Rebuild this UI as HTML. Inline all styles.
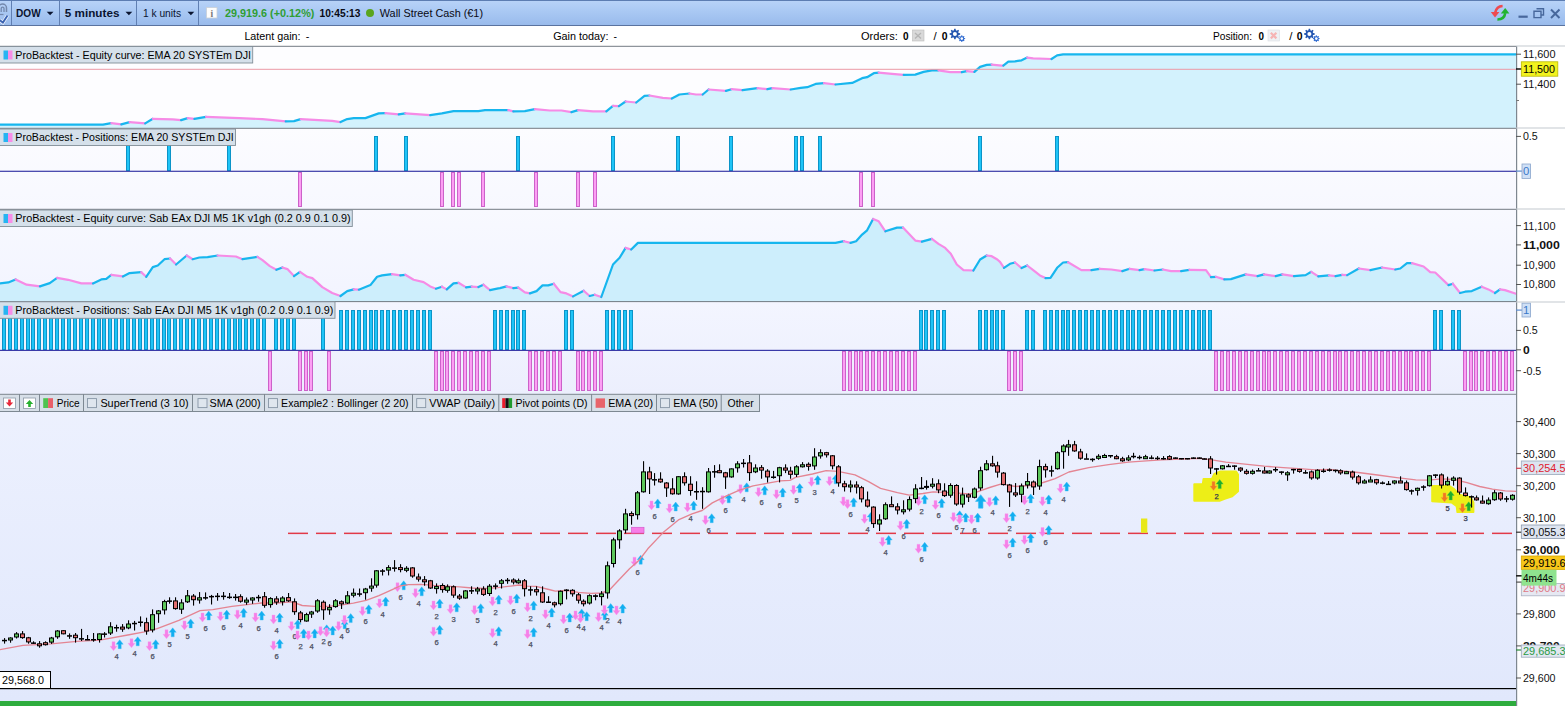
<!DOCTYPE html>
<html><head><meta charset="utf-8"><title>DOW - 5 minutes</title>
<style>html,body{margin:0;padding:0;background:#fff;overflow:hidden}svg{display:block}</style></head>
<body>
<svg width="1565" height="706" viewBox="0 0 1565 706" font-family="'Liberation Sans', Arial, sans-serif" shape-rendering="auto">
<defs>
<linearGradient id="tb" x1="0" y1="0" x2="0" y2="1"><stop offset="0" stop-color="#b9d3f8"/><stop offset="0.45" stop-color="#a9c8f3"/><stop offset="1" stop-color="#98baeb"/></linearGradient>
<linearGradient id="pbg" x1="0" y1="0" x2="0" y2="1"><stop offset="0" stop-color="#edf1fe"/><stop offset="1" stop-color="#e1e8fc"/></linearGradient>
<linearGradient id="p2bg" x1="0" y1="0" x2="0" y2="1"><stop offset="0" stop-color="#fcfcff"/><stop offset="1" stop-color="#f7f8ff"/></linearGradient>
<linearGradient id="p3bg" x1="0" y1="0" x2="0" y2="1"><stop offset="0" stop-color="#f8f9ff"/><stop offset="1" stop-color="#f2f4ff"/></linearGradient>
<linearGradient id="p4bg" x1="0" y1="0" x2="0" y2="1"><stop offset="0" stop-color="#f3f5ff"/><stop offset="1" stop-color="#eceffd"/></linearGradient>
<g id="pd"><path d="M-1.5,-4.5h3v4.5h2l-3.5,4.5l-3.5,-4.5h2z" fill="#f580e8" stroke="#f9a0ef" stroke-width="0.4"/></g>
<g id="bu"><path d="M-1.5,4.5h3v-4.5h2l-3.5,-4.5l-3.5,4.5h2z" fill="#12aef0" stroke="#3cc0f4" stroke-width="0.4"/></g>
<g id="od"><path d="M-1.5,-4.5h3v4.5h2l-3.5,4.5l-3.5,-4.5h2z" fill="#f27a1c" stroke="#f5a050" stroke-width="0.4"/></g>
<g id="gu"><path d="M-1.5,4.5h3v-4.5h2l-3.5,-4.5l-3.5,4.5h2z" fill="#1fae2a" stroke="#45c24e" stroke-width="0.4"/></g>
</defs>
<rect width="1565" height="706" fill="#fff"/>
<rect x="0" y="0" width="1565" height="26" fill="url(#tb)"/>
<rect x="0" y="0" width="1565" height="1" fill="#5d7db2"/>
<rect x="0" y="25" width="1565" height="1" fill="#5a739f"/>
<rect x="11.0" y="1" width="1" height="24" fill="#607fb2"/>
<rect x="59.0" y="1" width="1" height="24" fill="#607fb2"/>
<rect x="136.0" y="1" width="1" height="24" fill="#607fb2"/>
<rect x="198.0" y="1" width="1" height="24" fill="#607fb2"/>
<path d="M-1.5,12 V8 a4,4 0 0 1 8,0 V12" stroke="#7489ad" stroke-width="1.5" fill="none"/>
<path d="M1.2,12 V8.6 a1.4,1.4 0 0 1 2.8,0 V12" stroke="#7489ad" stroke-width="1.3" fill="none"/>
<path d="M-0.5,14.5h4" stroke="#7489ad" stroke-width="1.2"/>
<path d="M-0.5,20 l3.4,2.6 l4.6,-7" stroke="#f4f8ff" stroke-width="3.4" fill="none"/>
<path d="M-0.5,20 l3.4,2.6 l4.6,-7" stroke="#3a63b2" stroke-width="1.9" fill="none"/>
<text x="16.1" y="16.8" font-size="11.5" font-weight="bold" fill="#0a1430" textLength="24.6" lengthAdjust="spacingAndGlyphs">DOW</text>
<text x="64.8" y="16.8" font-size="11.5" font-weight="bold" fill="#0a1430" textLength="54.6" lengthAdjust="spacingAndGlyphs">5 minutes</text>
<text x="142.9" y="16.8" font-size="11.5" font-weight="normal" fill="#0a1430" textLength="38.1" lengthAdjust="spacingAndGlyphs">1 k units</text>
<path d="M46.7,11.8h6.8l-3.4,3.4z" fill="#0a1430"/>
<path d="M125.5,11.8h6.8l-3.4,3.4z" fill="#0a1430"/>
<path d="M187.5,11.8h6.8l-3.4,3.4z" fill="#0a1430"/>
<rect x="206.5" y="7.5" width="10.5" height="10.5" fill="#fdfdfd" stroke="#c9cfd8" stroke-width="0.8"/>
<text x="211.8" y="16.5" font-size="9.5" font-weight="bold" font-family="'Liberation Serif', serif" fill="#777" text-anchor="middle">i</text>
<text x="224.9" y="16.8" font-size="11.5" font-weight="bold" fill="#2f9e33" textLength="89.5" lengthAdjust="spacingAndGlyphs">29,919.6 (+0.12%)</text>
<text x="319.5" y="16.8" font-size="11.5" font-weight="bold" fill="#0a0a14" textLength="40.9" lengthAdjust="spacingAndGlyphs">10:45:13</text>
<circle cx="370" cy="13" r="4" fill="#5aa51e"/>
<text x="379.8" y="16.8" font-size="11.5" font-weight="normal" fill="#0a0a14" textLength="103.2" lengthAdjust="spacingAndGlyphs">Wall Street Cash (€1)</text>
<path d="M1502.6,6 Q1496.6,6.3 1495.2,12.6" stroke="#ee4a50" stroke-width="2.6" fill="none"/><path d="M1490.8,12h8.6l-4.4,5.6z" fill="#ee4a50"/>
<path d="M1497.4,19.5 Q1504.4,19.6 1505.2,13.2" stroke="#22b430" stroke-width="2.6" fill="none"/><path d="M1500.8,13.5h8.6l-4.2,-5.4z" fill="#22b430"/>
<rect x="1518.5" y="15.6" width="9.2" height="2.2" fill="#47679c"/>
<path d="M1536.5,8.8h7v6.2h-2.4 M1534,11.2h7v6.4h-7z" stroke="#47679c" stroke-width="1.4" fill="none"/>
<path d="M1551,9.5l8.5,8.5M1559.5,9.5l-8.5,8.5" stroke="#47679c" stroke-width="2" fill="none"/>
<text x="244.4" y="40.0" font-size="10.8" font-weight="normal" fill="#000" textLength="56.2" lengthAdjust="spacingAndGlyphs">Latent gain:</text>
<text x="305.7" y="40.0" font-size="10.8" font-weight="normal" fill="#000" textLength="3.6" lengthAdjust="spacingAndGlyphs">-</text>
<text x="553.2" y="40.0" font-size="10.8" font-weight="normal" fill="#000" textLength="55.2" lengthAdjust="spacingAndGlyphs">Gain today:</text>
<text x="613.5" y="40.0" font-size="10.8" font-weight="normal" fill="#000" textLength="3.5" lengthAdjust="spacingAndGlyphs">-</text>
<text x="861.0" y="40.0" font-size="10.8" font-weight="normal" fill="#000" textLength="36.8" lengthAdjust="spacingAndGlyphs">Orders:</text>
<text x="903.0" y="40.0" font-size="10.8" font-weight="bold" fill="#000" textLength="5.6" lengthAdjust="spacingAndGlyphs">0</text>
<rect x="912.5" y="30" width="11.5" height="11" fill="#d9d9d9" stroke="#bdbdbd" stroke-width="0.6"/><path d="M915,33l6,5.5M921,33l-6,5.5" stroke="#b4b4b4" stroke-width="1.3"/>
<text x="933.6" y="40.0" font-size="10.8" font-weight="normal" fill="#000" textLength="3.2" lengthAdjust="spacingAndGlyphs">/</text>
<text x="941.8" y="40.0" font-size="10.8" font-weight="bold" fill="#000" textLength="5.8" lengthAdjust="spacingAndGlyphs">0</text>
<text x="1213.0" y="40.0" font-size="10.8" font-weight="normal" fill="#000" textLength="39.0" lengthAdjust="spacingAndGlyphs">Position:</text>
<text x="1258.5" y="40.0" font-size="10.8" font-weight="bold" fill="#000" textLength="5.5" lengthAdjust="spacingAndGlyphs">0</text>
<rect x="1268" y="30" width="11.5" height="11" fill="#eef1f4" stroke="#d9dee3" stroke-width="0.6"/><path d="M1270.8,32.8l5.6,5.6M1276.4,32.8l-5.6,5.6" stroke="#f6b4b4" stroke-width="2.2"/>
<text x="1289.2" y="40.0" font-size="10.8" font-weight="normal" fill="#000" textLength="3.2" lengthAdjust="spacingAndGlyphs">/</text>
<text x="1296.8" y="40.0" font-size="10.8" font-weight="bold" fill="#000" textLength="5.8" lengthAdjust="spacingAndGlyphs">0</text>
<path d="M960.16,33.31L960.16,34.69L958.59,34.99L958.21,35.91L959.10,37.23L958.13,38.20L956.81,37.31L955.89,37.69L955.59,39.26L954.21,39.26L953.91,37.69L952.99,37.31L951.67,38.20L950.70,37.23L951.59,35.91L951.21,34.99L949.64,34.69L949.64,33.31L951.21,33.01L951.59,32.09L950.70,30.77L951.67,29.80L952.99,30.69L953.91,30.31L954.21,28.74L955.59,28.74L955.89,30.31L956.81,30.69L958.13,29.80L959.10,30.77L958.21,32.09L958.59,33.01z" fill="#2456b0"/><circle cx="954.9" cy="34.0" r="2.01" fill="#fff"/>
<path d="M965.17,38.16L965.17,39.04L964.16,39.24L963.92,39.82L964.50,40.67L963.87,41.30L963.02,40.72L962.44,40.96L962.24,41.97L961.36,41.97L961.16,40.96L960.58,40.72L959.73,41.30L959.10,40.67L959.68,39.82L959.44,39.24L958.43,39.04L958.43,38.16L959.44,37.96L959.68,37.38L959.10,36.53L959.73,35.90L960.58,36.48L961.16,36.24L961.36,35.23L962.24,35.23L962.44,36.24L963.02,36.48L963.87,35.90L964.50,36.53L963.92,37.38L964.16,37.96z" fill="#2f6ad0"/><circle cx="961.8" cy="38.6" r="1.29" fill="#fff"/>
<path d="M1314.66,33.31L1314.66,34.69L1313.09,34.99L1312.71,35.91L1313.60,37.23L1312.63,38.20L1311.31,37.31L1310.39,37.69L1310.09,39.26L1308.71,39.26L1308.41,37.69L1307.49,37.31L1306.17,38.20L1305.20,37.23L1306.09,35.91L1305.71,34.99L1304.14,34.69L1304.14,33.31L1305.71,33.01L1306.09,32.09L1305.20,30.77L1306.17,29.80L1307.49,30.69L1308.41,30.31L1308.71,28.74L1310.09,28.74L1310.39,30.31L1311.31,30.69L1312.63,29.80L1313.60,30.77L1312.71,32.09L1313.09,33.01z" fill="#2456b0"/><circle cx="1309.4" cy="34.0" r="2.01" fill="#fff"/>
<path d="M1319.67,38.16L1319.67,39.04L1318.66,39.24L1318.42,39.82L1319.00,40.67L1318.37,41.30L1317.52,40.72L1316.94,40.96L1316.74,41.97L1315.86,41.97L1315.66,40.96L1315.08,40.72L1314.23,41.30L1313.60,40.67L1314.18,39.82L1313.94,39.24L1312.93,39.04L1312.93,38.16L1313.94,37.96L1314.18,37.38L1313.60,36.53L1314.23,35.90L1315.08,36.48L1315.66,36.24L1315.86,35.23L1316.74,35.23L1316.94,36.24L1317.52,36.48L1318.37,35.90L1319.00,36.53L1318.42,37.38L1318.66,37.96z" fill="#2f6ad0"/><circle cx="1316.3000000000002" cy="38.6" r="1.29" fill="#fff"/>
<rect x="0" y="46" width="1516" height="82" fill="#fdfdff"/>
<rect x="0" y="128" width="1516" height="81" fill="url(#p2bg)"/>
<rect x="0" y="209" width="1516" height="93" fill="url(#p3bg)"/>
<rect x="0" y="302" width="1516" height="92" fill="url(#p4bg)"/>
<rect x="0" y="394" width="1516" height="307" fill="url(#pbg)"/>
<path d="M0.0,124.7 L103.0,124.7 L111.3,123.1 L121.3,124.4 L129.6,122.1 L145.2,123.4 L152.8,118.8 L172.8,119.4 L181.1,120.1 L187.7,118.1 L194.4,118.8 L206.0,116.8 L239.2,118.1 L262.5,119.1 L285.7,121.4 L294.0,121.1 L300.7,119.1 L332.2,120.8 L340.5,122.1 L347.2,119.1 L353.8,118.1 L365.4,118.1 L378.7,113.4 L385.4,113.1 L398.7,114.4 L405.3,113.4 L430.2,115.1 L441.9,113.4 L453.5,111.1 L478.4,111.1 L485.0,110.1 L508.3,110.1 L513.3,111.4 L524.9,111.1 L534.9,109.1 L549.8,110.5 L561.5,110.5 L571.4,112.1 L578.1,110.1 L593.0,111.4 L606.3,111.4 L613.0,105.8 L618.9,106.1 L625.6,101.5 L636.2,102.5 L644.5,95.8 L649.5,95.5 L662.8,97.8 L671.8,98.5 L679.4,94.5 L689.4,93.5 L696.0,94.5 L702.7,94.5 L708.6,89.5 L725.9,90.9 L731.6,89.2 L742.5,90.2 L757.5,88.2 L767.4,89.2 L772.4,88.2 L790.7,89.5 L800.7,87.9 L807.3,87.2 L815.6,83.9 L823.9,83.2 L835.5,84.5 L852.2,82.9 L862.1,78.2 L867.1,77.2 L873.8,73.2 L878.7,72.6 L892.0,73.9 L903.7,74.9 L915.3,74.6 L923.6,71.9 L931.9,70.3 L938.5,70.3 L950.2,72.2 L961.8,72.2 L966.8,71.2 L974.4,71.9 L980.1,66.9 L986.7,64.9 L991.7,64.6 L1001.7,65.6 L1003.3,65.6 L1008.3,61.6 L1015.0,61.3 L1021.6,60.3 L1027.2,57.6 L1033.2,58.3 L1051.5,59.0 L1057.1,55.3 L1063.1,54.3 L1516.0,54.3 L1516.0,128 L0.0,128 z" fill="#d3f2fd"/>
<path d="M0.0,124.7 L103.0,124.7 L111.3,123.1" fill="none" stroke="#17b6ee" stroke-width="2.2" stroke-linejoin="round" stroke-linecap="round"/>
<path d="M111.3,123.1 L121.3,124.4" fill="none" stroke="#f68be6" stroke-width="2.2" stroke-linejoin="round" stroke-linecap="round"/>
<path d="M121.3,124.4 L129.6,122.1" fill="none" stroke="#17b6ee" stroke-width="2.2" stroke-linejoin="round" stroke-linecap="round"/>
<path d="M129.6,122.1 L145.2,123.4" fill="none" stroke="#f68be6" stroke-width="2.2" stroke-linejoin="round" stroke-linecap="round"/>
<path d="M145.2,123.4 L152.8,118.8" fill="none" stroke="#17b6ee" stroke-width="2.2" stroke-linejoin="round" stroke-linecap="round"/>
<path d="M152.8,118.8 L172.8,119.4 L181.1,120.1" fill="none" stroke="#f68be6" stroke-width="2.2" stroke-linejoin="round" stroke-linecap="round"/>
<path d="M181.1,120.1 L187.7,118.1" fill="none" stroke="#17b6ee" stroke-width="2.2" stroke-linejoin="round" stroke-linecap="round"/>
<path d="M187.7,118.1 L194.4,118.8" fill="none" stroke="#f68be6" stroke-width="2.2" stroke-linejoin="round" stroke-linecap="round"/>
<path d="M194.4,118.8 L206.0,116.8" fill="none" stroke="#17b6ee" stroke-width="2.2" stroke-linejoin="round" stroke-linecap="round"/>
<path d="M206.0,116.8 L239.2,118.1 L262.5,119.1 L285.7,121.4" fill="none" stroke="#f68be6" stroke-width="2.2" stroke-linejoin="round" stroke-linecap="round"/>
<path d="M285.7,121.4 L294.0,121.1 L300.7,119.1" fill="none" stroke="#17b6ee" stroke-width="2.2" stroke-linejoin="round" stroke-linecap="round"/>
<path d="M300.7,119.1 L332.2,120.8 L340.5,122.1" fill="none" stroke="#f68be6" stroke-width="2.2" stroke-linejoin="round" stroke-linecap="round"/>
<path d="M340.5,122.1 L347.2,119.1 L353.8,118.1 L365.4,118.1 L378.7,113.4 L385.4,113.1" fill="none" stroke="#17b6ee" stroke-width="2.2" stroke-linejoin="round" stroke-linecap="round"/>
<path d="M385.4,113.1 L398.7,114.4" fill="none" stroke="#f68be6" stroke-width="2.2" stroke-linejoin="round" stroke-linecap="round"/>
<path d="M398.7,114.4 L405.3,113.4" fill="none" stroke="#17b6ee" stroke-width="2.2" stroke-linejoin="round" stroke-linecap="round"/>
<path d="M405.3,113.4 L430.2,115.1" fill="none" stroke="#f68be6" stroke-width="2.2" stroke-linejoin="round" stroke-linecap="round"/>
<path d="M430.2,115.1 L441.9,113.4 L453.5,111.1 L478.4,111.1 L485.0,110.1 L508.3,110.1" fill="none" stroke="#17b6ee" stroke-width="2.2" stroke-linejoin="round" stroke-linecap="round"/>
<path d="M508.3,110.1 L513.3,111.4" fill="none" stroke="#f68be6" stroke-width="2.2" stroke-linejoin="round" stroke-linecap="round"/>
<path d="M513.3,111.4 L524.9,111.1 L534.9,109.1" fill="none" stroke="#17b6ee" stroke-width="2.2" stroke-linejoin="round" stroke-linecap="round"/>
<path d="M534.9,109.1 L549.8,110.5 L561.5,110.5 L571.4,112.1" fill="none" stroke="#f68be6" stroke-width="2.2" stroke-linejoin="round" stroke-linecap="round"/>
<path d="M571.4,112.1 L578.1,110.1" fill="none" stroke="#17b6ee" stroke-width="2.2" stroke-linejoin="round" stroke-linecap="round"/>
<path d="M578.1,110.1 L593.0,111.4 L606.3,111.4" fill="none" stroke="#f68be6" stroke-width="2.2" stroke-linejoin="round" stroke-linecap="round"/>
<path d="M606.3,111.4 L613.0,105.8" fill="none" stroke="#17b6ee" stroke-width="2.2" stroke-linejoin="round" stroke-linecap="round"/>
<path d="M613.0,105.8 L618.9,106.1" fill="none" stroke="#f68be6" stroke-width="2.2" stroke-linejoin="round" stroke-linecap="round"/>
<path d="M618.9,106.1 L625.6,101.5" fill="none" stroke="#17b6ee" stroke-width="2.2" stroke-linejoin="round" stroke-linecap="round"/>
<path d="M625.6,101.5 L636.2,102.5" fill="none" stroke="#f68be6" stroke-width="2.2" stroke-linejoin="round" stroke-linecap="round"/>
<path d="M636.2,102.5 L644.5,95.8 L649.5,95.5" fill="none" stroke="#17b6ee" stroke-width="2.2" stroke-linejoin="round" stroke-linecap="round"/>
<path d="M649.5,95.5 L662.8,97.8 L671.8,98.5" fill="none" stroke="#f68be6" stroke-width="2.2" stroke-linejoin="round" stroke-linecap="round"/>
<path d="M671.8,98.5 L679.4,94.5 L689.4,93.5" fill="none" stroke="#17b6ee" stroke-width="2.2" stroke-linejoin="round" stroke-linecap="round"/>
<path d="M689.4,93.5 L696.0,94.5 L702.7,94.5" fill="none" stroke="#f68be6" stroke-width="2.2" stroke-linejoin="round" stroke-linecap="round"/>
<path d="M702.7,94.5 L708.6,89.5" fill="none" stroke="#17b6ee" stroke-width="2.2" stroke-linejoin="round" stroke-linecap="round"/>
<path d="M708.6,89.5 L725.9,90.9" fill="none" stroke="#f68be6" stroke-width="2.2" stroke-linejoin="round" stroke-linecap="round"/>
<path d="M725.9,90.9 L731.6,89.2" fill="none" stroke="#17b6ee" stroke-width="2.2" stroke-linejoin="round" stroke-linecap="round"/>
<path d="M731.6,89.2 L742.5,90.2" fill="none" stroke="#f68be6" stroke-width="2.2" stroke-linejoin="round" stroke-linecap="round"/>
<path d="M742.5,90.2 L757.5,88.2" fill="none" stroke="#17b6ee" stroke-width="2.2" stroke-linejoin="round" stroke-linecap="round"/>
<path d="M757.5,88.2 L767.4,89.2" fill="none" stroke="#f68be6" stroke-width="2.2" stroke-linejoin="round" stroke-linecap="round"/>
<path d="M767.4,89.2 L772.4,88.2" fill="none" stroke="#17b6ee" stroke-width="2.2" stroke-linejoin="round" stroke-linecap="round"/>
<path d="M772.4,88.2 L790.7,89.5" fill="none" stroke="#f68be6" stroke-width="2.2" stroke-linejoin="round" stroke-linecap="round"/>
<path d="M790.7,89.5 L800.7,87.9 L807.3,87.2 L815.6,83.9 L823.9,83.2" fill="none" stroke="#17b6ee" stroke-width="2.2" stroke-linejoin="round" stroke-linecap="round"/>
<path d="M823.9,83.2 L835.5,84.5" fill="none" stroke="#f68be6" stroke-width="2.2" stroke-linejoin="round" stroke-linecap="round"/>
<path d="M835.5,84.5 L852.2,82.9 L862.1,78.2 L867.1,77.2 L873.8,73.2 L878.7,72.6" fill="none" stroke="#17b6ee" stroke-width="2.2" stroke-linejoin="round" stroke-linecap="round"/>
<path d="M878.7,72.6 L892.0,73.9 L903.7,74.9" fill="none" stroke="#f68be6" stroke-width="2.2" stroke-linejoin="round" stroke-linecap="round"/>
<path d="M903.7,74.9 L915.3,74.6 L923.6,71.9 L931.9,70.3 L938.5,70.3" fill="none" stroke="#17b6ee" stroke-width="2.2" stroke-linejoin="round" stroke-linecap="round"/>
<path d="M938.5,70.3 L950.2,72.2 L961.8,72.2" fill="none" stroke="#f68be6" stroke-width="2.2" stroke-linejoin="round" stroke-linecap="round"/>
<path d="M961.8,72.2 L966.8,71.2" fill="none" stroke="#17b6ee" stroke-width="2.2" stroke-linejoin="round" stroke-linecap="round"/>
<path d="M966.8,71.2 L974.4,71.9" fill="none" stroke="#f68be6" stroke-width="2.2" stroke-linejoin="round" stroke-linecap="round"/>
<path d="M974.4,71.9 L980.1,66.9 L986.7,64.9 L991.7,64.6" fill="none" stroke="#17b6ee" stroke-width="2.2" stroke-linejoin="round" stroke-linecap="round"/>
<path d="M991.7,64.6 L1001.7,65.6 L1003.3,65.6" fill="none" stroke="#f68be6" stroke-width="2.2" stroke-linejoin="round" stroke-linecap="round"/>
<path d="M1003.3,65.6 L1008.3,61.6 L1015.0,61.3 L1021.6,60.3 L1027.2,57.6" fill="none" stroke="#17b6ee" stroke-width="2.2" stroke-linejoin="round" stroke-linecap="round"/>
<path d="M1027.2,57.6 L1033.2,58.3 L1051.5,59.0" fill="none" stroke="#f68be6" stroke-width="2.2" stroke-linejoin="round" stroke-linecap="round"/>
<path d="M1051.5,59.0 L1057.1,55.3 L1063.1,54.3 L1516.0,54.3" fill="none" stroke="#17b6ee" stroke-width="2.2" stroke-linejoin="round" stroke-linecap="round"/>
<rect x="0" y="68.8" width="1516" height="1" fill="#eb9aa6"/>
<path d="M0.0,283.4 L8.3,282.4 L15.6,279.4 L26.6,284.7 L39.9,286.4 L49.8,283.1 L57.1,277.8 L68.1,279.8 L81.4,283.4 L93.0,283.4 L101.3,279.4 L106.3,278.8 L111.3,274.8 L122.9,276.4 L129.6,273.1 L141.2,272.1 L146.2,276.8 L152.8,267.1 L157.8,265.5 L164.5,259.2 L170.1,258.5 L176.1,264.5 L186.7,255.5 L192.7,259.2 L199.3,257.5 L207.6,257.2 L217.6,255.5 L235.9,256.5 L242.5,259.2 L257.5,256.8 L262.5,260.2 L269.8,266.1 L276.4,269.8 L282.4,267.5 L287.4,269.1 L294.0,276.1 L300.0,271.8 L307.3,276.8 L312.3,278.1 L322.3,287.1 L332.2,293.0 L340.5,296.0 L347.2,291.1 L353.8,289.4 L358.8,289.7 L370.4,285.1 L377.1,276.8 L382.1,275.4 L392.0,274.1 L400.3,275.4 L405.3,274.8 L413.6,279.8 L423.6,282.1 L430.2,286.4 L435.9,288.7 L441.9,286.7 L446.8,289.4 L453.5,283.4 L458.5,282.8 L466.1,287.4 L471.8,286.7 L478.4,287.1 L483.4,284.7 L490.0,290.1 L498.3,288.4 L500.0,288.1 L506.6,286.4 L513.3,288.1 L518.3,287.7 L524.9,292.4 L529.9,293.4 L536.5,291.1 L542.5,285.4 L548.2,285.4 L553.8,283.7 L560.5,292.1 L566.4,293.4 L573.1,296.4 L583.7,290.7 L589.7,296.0 L594.7,294.7 L601.3,297.0 L613.0,264.5 L619.6,257.8 L625.6,247.9 L631.2,249.5 L637.9,242.9 L835.5,242.9 L843.9,241.2 L850.5,242.9 L856.1,241.2 L862.1,234.6 L867.1,230.3 L873.1,219.0 L878.7,221.3 L885.4,231.3 L897.0,227.6 L903.0,227.6 L915.3,240.6 L921.9,241.6 L931.9,238.9 L938.5,243.9 L945.2,247.9 L950.8,253.8 L956.8,264.5 L963.5,270.1 L973.4,270.5 L980.1,259.5 L986.7,255.5 L991.7,256.2 L997.3,259.5 L1000.0,261.8 L1004.0,267.8 L1010.0,263.8 L1015.0,262.5 L1021.6,268.1 L1027.2,265.5 L1033.2,270.1 L1039.9,275.4 L1045.5,278.1 L1050.5,277.8 L1057.1,267.8 L1063.1,262.5 L1068.1,262.2 L1081.4,270.1 L1091.4,270.1 L1099.7,268.8 L1111.3,269.5 L1122.3,271.1 L1129.6,268.8 L1139.5,270.1 L1144.5,269.1 L1154.5,270.5 L1162.8,269.5 L1171.1,271.1 L1181.1,271.1 L1189.4,269.8 L1206.0,270.1 L1211.0,277.1 L1215.9,276.8 L1224.3,279.4 L1230.9,279.1 L1245.8,274.4 L1257.5,276.1 L1264.1,274.4 L1275.7,276.1 L1282.4,274.4 L1294.0,276.1 L1305.6,275.1 L1311.3,271.8 L1318.3,276.4 L1328.9,275.4 L1335.5,276.1 L1342.2,274.8 L1347.2,275.1 L1358.8,268.5 L1370.4,270.1 L1382.1,267.5 L1395.3,269.5 L1400.3,268.5 L1407.0,263.1 L1412.0,263.1 L1423.6,266.5 L1430.2,272.1 L1435.2,272.5 L1448.5,285.1 L1452.8,283.7 L1460.1,293.0 L1465.1,291.7 L1471.8,291.1 L1481.7,286.7 L1488.4,289.4 L1495.0,293.0 L1500.0,289.4 L1505.0,290.1 L1516.0,293.7 L1516.0,302 L0.0,302 z" fill="#cdeefc"/>
<path d="M0.0,283.4 L8.3,282.4 L15.6,279.4" fill="none" stroke="#17b6ee" stroke-width="2.2" stroke-linejoin="round" stroke-linecap="round"/>
<path d="M15.6,279.4 L26.6,284.7 L39.9,286.4" fill="none" stroke="#f68be6" stroke-width="2.2" stroke-linejoin="round" stroke-linecap="round"/>
<path d="M39.9,286.4 L49.8,283.1 L57.1,277.8" fill="none" stroke="#17b6ee" stroke-width="2.2" stroke-linejoin="round" stroke-linecap="round"/>
<path d="M57.1,277.8 L68.1,279.8 L81.4,283.4 L93.0,283.4" fill="none" stroke="#f68be6" stroke-width="2.2" stroke-linejoin="round" stroke-linecap="round"/>
<path d="M93.0,283.4 L101.3,279.4 L106.3,278.8 L111.3,274.8" fill="none" stroke="#17b6ee" stroke-width="2.2" stroke-linejoin="round" stroke-linecap="round"/>
<path d="M111.3,274.8 L122.9,276.4" fill="none" stroke="#f68be6" stroke-width="2.2" stroke-linejoin="round" stroke-linecap="round"/>
<path d="M122.9,276.4 L129.6,273.1 L141.2,272.1" fill="none" stroke="#17b6ee" stroke-width="2.2" stroke-linejoin="round" stroke-linecap="round"/>
<path d="M141.2,272.1 L146.2,276.8" fill="none" stroke="#f68be6" stroke-width="2.2" stroke-linejoin="round" stroke-linecap="round"/>
<path d="M146.2,276.8 L152.8,267.1 L157.8,265.5 L164.5,259.2 L170.1,258.5" fill="none" stroke="#17b6ee" stroke-width="2.2" stroke-linejoin="round" stroke-linecap="round"/>
<path d="M170.1,258.5 L176.1,264.5" fill="none" stroke="#f68be6" stroke-width="2.2" stroke-linejoin="round" stroke-linecap="round"/>
<path d="M176.1,264.5 L186.7,255.5" fill="none" stroke="#17b6ee" stroke-width="2.2" stroke-linejoin="round" stroke-linecap="round"/>
<path d="M186.7,255.5 L192.7,259.2" fill="none" stroke="#f68be6" stroke-width="2.2" stroke-linejoin="round" stroke-linecap="round"/>
<path d="M192.7,259.2 L199.3,257.5 L207.6,257.2 L217.6,255.5" fill="none" stroke="#17b6ee" stroke-width="2.2" stroke-linejoin="round" stroke-linecap="round"/>
<path d="M217.6,255.5 L235.9,256.5 L242.5,259.2" fill="none" stroke="#f68be6" stroke-width="2.2" stroke-linejoin="round" stroke-linecap="round"/>
<path d="M242.5,259.2 L257.5,256.8" fill="none" stroke="#17b6ee" stroke-width="2.2" stroke-linejoin="round" stroke-linecap="round"/>
<path d="M257.5,256.8 L262.5,260.2 L269.8,266.1 L276.4,269.8" fill="none" stroke="#f68be6" stroke-width="2.2" stroke-linejoin="round" stroke-linecap="round"/>
<path d="M276.4,269.8 L282.4,267.5" fill="none" stroke="#17b6ee" stroke-width="2.2" stroke-linejoin="round" stroke-linecap="round"/>
<path d="M282.4,267.5 L287.4,269.1 L294.0,276.1" fill="none" stroke="#f68be6" stroke-width="2.2" stroke-linejoin="round" stroke-linecap="round"/>
<path d="M294.0,276.1 L300.0,271.8" fill="none" stroke="#17b6ee" stroke-width="2.2" stroke-linejoin="round" stroke-linecap="round"/>
<path d="M300.0,271.8 L307.3,276.8 L312.3,278.1 L322.3,287.1 L332.2,293.0 L340.5,296.0" fill="none" stroke="#f68be6" stroke-width="2.2" stroke-linejoin="round" stroke-linecap="round"/>
<path d="M340.5,296.0 L347.2,291.1 L353.8,289.4" fill="none" stroke="#17b6ee" stroke-width="2.2" stroke-linejoin="round" stroke-linecap="round"/>
<path d="M353.8,289.4 L358.8,289.7" fill="none" stroke="#f68be6" stroke-width="2.2" stroke-linejoin="round" stroke-linecap="round"/>
<path d="M358.8,289.7 L370.4,285.1 L377.1,276.8 L382.1,275.4 L392.0,274.1" fill="none" stroke="#17b6ee" stroke-width="2.2" stroke-linejoin="round" stroke-linecap="round"/>
<path d="M392.0,274.1 L400.3,275.4" fill="none" stroke="#f68be6" stroke-width="2.2" stroke-linejoin="round" stroke-linecap="round"/>
<path d="M400.3,275.4 L405.3,274.8" fill="none" stroke="#17b6ee" stroke-width="2.2" stroke-linejoin="round" stroke-linecap="round"/>
<path d="M405.3,274.8 L413.6,279.8 L423.6,282.1 L430.2,286.4 L435.9,288.7" fill="none" stroke="#f68be6" stroke-width="2.2" stroke-linejoin="round" stroke-linecap="round"/>
<path d="M435.9,288.7 L441.9,286.7" fill="none" stroke="#17b6ee" stroke-width="2.2" stroke-linejoin="round" stroke-linecap="round"/>
<path d="M441.9,286.7 L446.8,289.4" fill="none" stroke="#f68be6" stroke-width="2.2" stroke-linejoin="round" stroke-linecap="round"/>
<path d="M446.8,289.4 L453.5,283.4 L458.5,282.8" fill="none" stroke="#17b6ee" stroke-width="2.2" stroke-linejoin="round" stroke-linecap="round"/>
<path d="M458.5,282.8 L466.1,287.4" fill="none" stroke="#f68be6" stroke-width="2.2" stroke-linejoin="round" stroke-linecap="round"/>
<path d="M466.1,287.4 L471.8,286.7" fill="none" stroke="#17b6ee" stroke-width="2.2" stroke-linejoin="round" stroke-linecap="round"/>
<path d="M471.8,286.7 L478.4,287.1" fill="none" stroke="#f68be6" stroke-width="2.2" stroke-linejoin="round" stroke-linecap="round"/>
<path d="M478.4,287.1 L483.4,284.7" fill="none" stroke="#17b6ee" stroke-width="2.2" stroke-linejoin="round" stroke-linecap="round"/>
<path d="M483.4,284.7 L490.0,290.1" fill="none" stroke="#f68be6" stroke-width="2.2" stroke-linejoin="round" stroke-linecap="round"/>
<path d="M490.0,290.1 L498.3,288.4 L500.0,288.1 L506.6,286.4" fill="none" stroke="#17b6ee" stroke-width="2.2" stroke-linejoin="round" stroke-linecap="round"/>
<path d="M506.6,286.4 L513.3,288.1" fill="none" stroke="#f68be6" stroke-width="2.2" stroke-linejoin="round" stroke-linecap="round"/>
<path d="M513.3,288.1 L518.3,287.7" fill="none" stroke="#17b6ee" stroke-width="2.2" stroke-linejoin="round" stroke-linecap="round"/>
<path d="M518.3,287.7 L524.9,292.4 L529.9,293.4" fill="none" stroke="#f68be6" stroke-width="2.2" stroke-linejoin="round" stroke-linecap="round"/>
<path d="M529.9,293.4 L536.5,291.1 L542.5,285.4 L548.2,285.4 L553.8,283.7" fill="none" stroke="#17b6ee" stroke-width="2.2" stroke-linejoin="round" stroke-linecap="round"/>
<path d="M553.8,283.7 L560.5,292.1 L566.4,293.4 L573.1,296.4" fill="none" stroke="#f68be6" stroke-width="2.2" stroke-linejoin="round" stroke-linecap="round"/>
<path d="M573.1,296.4 L583.7,290.7" fill="none" stroke="#17b6ee" stroke-width="2.2" stroke-linejoin="round" stroke-linecap="round"/>
<path d="M583.7,290.7 L589.7,296.0" fill="none" stroke="#f68be6" stroke-width="2.2" stroke-linejoin="round" stroke-linecap="round"/>
<path d="M589.7,296.0 L594.7,294.7" fill="none" stroke="#17b6ee" stroke-width="2.2" stroke-linejoin="round" stroke-linecap="round"/>
<path d="M594.7,294.7 L601.3,297.0" fill="none" stroke="#f68be6" stroke-width="2.2" stroke-linejoin="round" stroke-linecap="round"/>
<path d="M601.3,297.0 L613.0,264.5 L619.6,257.8 L625.6,247.9" fill="none" stroke="#17b6ee" stroke-width="2.2" stroke-linejoin="round" stroke-linecap="round"/>
<path d="M625.6,247.9 L631.2,249.5" fill="none" stroke="#f68be6" stroke-width="2.2" stroke-linejoin="round" stroke-linecap="round"/>
<path d="M631.2,249.5 L637.9,242.9 L835.5,242.9 L843.9,241.2" fill="none" stroke="#17b6ee" stroke-width="2.2" stroke-linejoin="round" stroke-linecap="round"/>
<path d="M843.9,241.2 L850.5,242.9" fill="none" stroke="#f68be6" stroke-width="2.2" stroke-linejoin="round" stroke-linecap="round"/>
<path d="M850.5,242.9 L856.1,241.2 L862.1,234.6 L867.1,230.3 L873.1,219.0" fill="none" stroke="#17b6ee" stroke-width="2.2" stroke-linejoin="round" stroke-linecap="round"/>
<path d="M873.1,219.0 L878.7,221.3 L885.4,231.3" fill="none" stroke="#f68be6" stroke-width="2.2" stroke-linejoin="round" stroke-linecap="round"/>
<path d="M885.4,231.3 L897.0,227.6 L903.0,227.6" fill="none" stroke="#17b6ee" stroke-width="2.2" stroke-linejoin="round" stroke-linecap="round"/>
<path d="M903.0,227.6 L915.3,240.6 L921.9,241.6" fill="none" stroke="#f68be6" stroke-width="2.2" stroke-linejoin="round" stroke-linecap="round"/>
<path d="M921.9,241.6 L931.9,238.9" fill="none" stroke="#17b6ee" stroke-width="2.2" stroke-linejoin="round" stroke-linecap="round"/>
<path d="M931.9,238.9 L938.5,243.9 L945.2,247.9 L950.8,253.8 L956.8,264.5 L963.5,270.1 L973.4,270.5" fill="none" stroke="#f68be6" stroke-width="2.2" stroke-linejoin="round" stroke-linecap="round"/>
<path d="M973.4,270.5 L980.1,259.5 L986.7,255.5" fill="none" stroke="#17b6ee" stroke-width="2.2" stroke-linejoin="round" stroke-linecap="round"/>
<path d="M986.7,255.5 L991.7,256.2 L997.3,259.5 L1000.0,261.8 L1004.0,267.8" fill="none" stroke="#f68be6" stroke-width="2.2" stroke-linejoin="round" stroke-linecap="round"/>
<path d="M1004.0,267.8 L1010.0,263.8 L1015.0,262.5" fill="none" stroke="#17b6ee" stroke-width="2.2" stroke-linejoin="round" stroke-linecap="round"/>
<path d="M1015.0,262.5 L1021.6,268.1" fill="none" stroke="#f68be6" stroke-width="2.2" stroke-linejoin="round" stroke-linecap="round"/>
<path d="M1021.6,268.1 L1027.2,265.5" fill="none" stroke="#17b6ee" stroke-width="2.2" stroke-linejoin="round" stroke-linecap="round"/>
<path d="M1027.2,265.5 L1033.2,270.1 L1039.9,275.4 L1045.5,278.1" fill="none" stroke="#f68be6" stroke-width="2.2" stroke-linejoin="round" stroke-linecap="round"/>
<path d="M1045.5,278.1 L1050.5,277.8 L1057.1,267.8 L1063.1,262.5 L1068.1,262.2" fill="none" stroke="#17b6ee" stroke-width="2.2" stroke-linejoin="round" stroke-linecap="round"/>
<path d="M1068.1,262.2 L1081.4,270.1 L1091.4,270.1" fill="none" stroke="#f68be6" stroke-width="2.2" stroke-linejoin="round" stroke-linecap="round"/>
<path d="M1091.4,270.1 L1099.7,268.8" fill="none" stroke="#17b6ee" stroke-width="2.2" stroke-linejoin="round" stroke-linecap="round"/>
<path d="M1099.7,268.8 L1111.3,269.5 L1122.3,271.1" fill="none" stroke="#f68be6" stroke-width="2.2" stroke-linejoin="round" stroke-linecap="round"/>
<path d="M1122.3,271.1 L1129.6,268.8" fill="none" stroke="#17b6ee" stroke-width="2.2" stroke-linejoin="round" stroke-linecap="round"/>
<path d="M1129.6,268.8 L1139.5,270.1" fill="none" stroke="#f68be6" stroke-width="2.2" stroke-linejoin="round" stroke-linecap="round"/>
<path d="M1139.5,270.1 L1144.5,269.1" fill="none" stroke="#17b6ee" stroke-width="2.2" stroke-linejoin="round" stroke-linecap="round"/>
<path d="M1144.5,269.1 L1154.5,270.5" fill="none" stroke="#f68be6" stroke-width="2.2" stroke-linejoin="round" stroke-linecap="round"/>
<path d="M1154.5,270.5 L1162.8,269.5" fill="none" stroke="#17b6ee" stroke-width="2.2" stroke-linejoin="round" stroke-linecap="round"/>
<path d="M1162.8,269.5 L1171.1,271.1 L1181.1,271.1" fill="none" stroke="#f68be6" stroke-width="2.2" stroke-linejoin="round" stroke-linecap="round"/>
<path d="M1181.1,271.1 L1189.4,269.8" fill="none" stroke="#17b6ee" stroke-width="2.2" stroke-linejoin="round" stroke-linecap="round"/>
<path d="M1189.4,269.8 L1206.0,270.1 L1211.0,277.1" fill="none" stroke="#f68be6" stroke-width="2.2" stroke-linejoin="round" stroke-linecap="round"/>
<path d="M1211.0,277.1 L1215.9,276.8" fill="none" stroke="#17b6ee" stroke-width="2.2" stroke-linejoin="round" stroke-linecap="round"/>
<path d="M1215.9,276.8 L1224.3,279.4" fill="none" stroke="#f68be6" stroke-width="2.2" stroke-linejoin="round" stroke-linecap="round"/>
<path d="M1224.3,279.4 L1230.9,279.1 L1245.8,274.4" fill="none" stroke="#17b6ee" stroke-width="2.2" stroke-linejoin="round" stroke-linecap="round"/>
<path d="M1245.8,274.4 L1257.5,276.1" fill="none" stroke="#f68be6" stroke-width="2.2" stroke-linejoin="round" stroke-linecap="round"/>
<path d="M1257.5,276.1 L1264.1,274.4" fill="none" stroke="#17b6ee" stroke-width="2.2" stroke-linejoin="round" stroke-linecap="round"/>
<path d="M1264.1,274.4 L1275.7,276.1" fill="none" stroke="#f68be6" stroke-width="2.2" stroke-linejoin="round" stroke-linecap="round"/>
<path d="M1275.7,276.1 L1282.4,274.4" fill="none" stroke="#17b6ee" stroke-width="2.2" stroke-linejoin="round" stroke-linecap="round"/>
<path d="M1282.4,274.4 L1294.0,276.1" fill="none" stroke="#f68be6" stroke-width="2.2" stroke-linejoin="round" stroke-linecap="round"/>
<path d="M1294.0,276.1 L1305.6,275.1 L1311.3,271.8" fill="none" stroke="#17b6ee" stroke-width="2.2" stroke-linejoin="round" stroke-linecap="round"/>
<path d="M1311.3,271.8 L1318.3,276.4" fill="none" stroke="#f68be6" stroke-width="2.2" stroke-linejoin="round" stroke-linecap="round"/>
<path d="M1318.3,276.4 L1328.9,275.4" fill="none" stroke="#17b6ee" stroke-width="2.2" stroke-linejoin="round" stroke-linecap="round"/>
<path d="M1328.9,275.4 L1335.5,276.1" fill="none" stroke="#f68be6" stroke-width="2.2" stroke-linejoin="round" stroke-linecap="round"/>
<path d="M1335.5,276.1 L1342.2,274.8" fill="none" stroke="#17b6ee" stroke-width="2.2" stroke-linejoin="round" stroke-linecap="round"/>
<path d="M1342.2,274.8 L1347.2,275.1" fill="none" stroke="#f68be6" stroke-width="2.2" stroke-linejoin="round" stroke-linecap="round"/>
<path d="M1347.2,275.1 L1358.8,268.5" fill="none" stroke="#17b6ee" stroke-width="2.2" stroke-linejoin="round" stroke-linecap="round"/>
<path d="M1358.8,268.5 L1370.4,270.1" fill="none" stroke="#f68be6" stroke-width="2.2" stroke-linejoin="round" stroke-linecap="round"/>
<path d="M1370.4,270.1 L1382.1,267.5" fill="none" stroke="#17b6ee" stroke-width="2.2" stroke-linejoin="round" stroke-linecap="round"/>
<path d="M1382.1,267.5 L1395.3,269.5" fill="none" stroke="#f68be6" stroke-width="2.2" stroke-linejoin="round" stroke-linecap="round"/>
<path d="M1395.3,269.5 L1400.3,268.5 L1407.0,263.1 L1412.0,263.1" fill="none" stroke="#17b6ee" stroke-width="2.2" stroke-linejoin="round" stroke-linecap="round"/>
<path d="M1412.0,263.1 L1423.6,266.5 L1430.2,272.1 L1435.2,272.5 L1448.5,285.1" fill="none" stroke="#f68be6" stroke-width="2.2" stroke-linejoin="round" stroke-linecap="round"/>
<path d="M1448.5,285.1 L1452.8,283.7" fill="none" stroke="#17b6ee" stroke-width="2.2" stroke-linejoin="round" stroke-linecap="round"/>
<path d="M1452.8,283.7 L1460.1,293.0" fill="none" stroke="#f68be6" stroke-width="2.2" stroke-linejoin="round" stroke-linecap="round"/>
<path d="M1460.1,293.0 L1465.1,291.7 L1471.8,291.1 L1481.7,286.7" fill="none" stroke="#17b6ee" stroke-width="2.2" stroke-linejoin="round" stroke-linecap="round"/>
<path d="M1481.7,286.7 L1488.4,289.4 L1495.0,293.0" fill="none" stroke="#f68be6" stroke-width="2.2" stroke-linejoin="round" stroke-linecap="round"/>
<path d="M1495.0,293.0 L1500.0,289.4" fill="none" stroke="#17b6ee" stroke-width="2.2" stroke-linejoin="round" stroke-linecap="round"/>
<path d="M1500.0,289.4 L1505.0,290.1 L1516.0,293.7" fill="none" stroke="#f68be6" stroke-width="2.2" stroke-linejoin="round" stroke-linecap="round"/>
<rect x="126.5" y="136.5" width="3" height="34" fill="#1fc4f7" stroke="#0b94c8" stroke-width="1"/>
<rect x="167.5" y="136.5" width="3" height="34" fill="#1fc4f7" stroke="#0b94c8" stroke-width="1"/>
<rect x="227.5" y="136.5" width="3" height="34" fill="#1fc4f7" stroke="#0b94c8" stroke-width="1"/>
<rect x="374.5" y="136.5" width="3" height="34" fill="#1fc4f7" stroke="#0b94c8" stroke-width="1"/>
<rect x="404.5" y="136.5" width="3" height="34" fill="#1fc4f7" stroke="#0b94c8" stroke-width="1"/>
<rect x="516.5" y="136.5" width="3" height="34" fill="#1fc4f7" stroke="#0b94c8" stroke-width="1"/>
<rect x="611.5" y="136.5" width="3" height="34" fill="#1fc4f7" stroke="#0b94c8" stroke-width="1"/>
<rect x="676.5" y="136.5" width="3" height="34" fill="#1fc4f7" stroke="#0b94c8" stroke-width="1"/>
<rect x="729.5" y="136.5" width="3" height="34" fill="#1fc4f7" stroke="#0b94c8" stroke-width="1"/>
<rect x="794.5" y="136.5" width="3" height="34" fill="#1fc4f7" stroke="#0b94c8" stroke-width="1"/>
<rect x="800.5" y="136.5" width="3" height="34" fill="#1fc4f7" stroke="#0b94c8" stroke-width="1"/>
<rect x="818.5" y="136.5" width="3" height="34" fill="#1fc4f7" stroke="#0b94c8" stroke-width="1"/>
<rect x="978.5" y="136.5" width="3" height="34" fill="#1fc4f7" stroke="#0b94c8" stroke-width="1"/>
<rect x="1055.5" y="136.5" width="3" height="34" fill="#1fc4f7" stroke="#0b94c8" stroke-width="1"/>
<rect x="298.5" y="172.5" width="3" height="34" fill="#fc9ef4" stroke="#cc62c9" stroke-width="1"/>
<rect x="440.5" y="172.5" width="3" height="34" fill="#fc9ef4" stroke="#cc62c9" stroke-width="1"/>
<rect x="451.5" y="172.5" width="3" height="34" fill="#fc9ef4" stroke="#cc62c9" stroke-width="1"/>
<rect x="457.5" y="172.5" width="3" height="34" fill="#fc9ef4" stroke="#cc62c9" stroke-width="1"/>
<rect x="481.5" y="172.5" width="3" height="34" fill="#fc9ef4" stroke="#cc62c9" stroke-width="1"/>
<rect x="534.5" y="172.5" width="3" height="34" fill="#fc9ef4" stroke="#cc62c9" stroke-width="1"/>
<rect x="576.5" y="172.5" width="3" height="34" fill="#fc9ef4" stroke="#cc62c9" stroke-width="1"/>
<rect x="593.5" y="172.5" width="3" height="34" fill="#fc9ef4" stroke="#cc62c9" stroke-width="1"/>
<rect x="859.5" y="172.5" width="3" height="34" fill="#fc9ef4" stroke="#cc62c9" stroke-width="1"/>
<rect x="871.5" y="172.5" width="3" height="34" fill="#fc9ef4" stroke="#cc62c9" stroke-width="1"/>
<rect x="0" y="170.7" width="1516" height="1.2" fill="#3a3aa8"/>
<rect x="2.5" y="310.5" width="3" height="39" fill="#1fc4f7" stroke="#0b94c8" stroke-width="1"/>
<rect x="8.5" y="310.5" width="3" height="39" fill="#1fc4f7" stroke="#0b94c8" stroke-width="1"/>
<rect x="14.5" y="310.5" width="3" height="39" fill="#1fc4f7" stroke="#0b94c8" stroke-width="1"/>
<rect x="20.5" y="310.5" width="3" height="39" fill="#1fc4f7" stroke="#0b94c8" stroke-width="1"/>
<rect x="26.5" y="310.5" width="3" height="39" fill="#1fc4f7" stroke="#0b94c8" stroke-width="1"/>
<rect x="31.5" y="310.5" width="3" height="39" fill="#1fc4f7" stroke="#0b94c8" stroke-width="1"/>
<rect x="37.5" y="310.5" width="3" height="39" fill="#1fc4f7" stroke="#0b94c8" stroke-width="1"/>
<rect x="43.5" y="310.5" width="3" height="39" fill="#1fc4f7" stroke="#0b94c8" stroke-width="1"/>
<rect x="49.5" y="310.5" width="3" height="39" fill="#1fc4f7" stroke="#0b94c8" stroke-width="1"/>
<rect x="55.5" y="310.5" width="3" height="39" fill="#1fc4f7" stroke="#0b94c8" stroke-width="1"/>
<rect x="61.5" y="310.5" width="3" height="39" fill="#1fc4f7" stroke="#0b94c8" stroke-width="1"/>
<rect x="67.5" y="310.5" width="3" height="39" fill="#1fc4f7" stroke="#0b94c8" stroke-width="1"/>
<rect x="73.5" y="310.5" width="3" height="39" fill="#1fc4f7" stroke="#0b94c8" stroke-width="1"/>
<rect x="79.5" y="310.5" width="3" height="39" fill="#1fc4f7" stroke="#0b94c8" stroke-width="1"/>
<rect x="85.5" y="310.5" width="3" height="39" fill="#1fc4f7" stroke="#0b94c8" stroke-width="1"/>
<rect x="91.5" y="310.5" width="3" height="39" fill="#1fc4f7" stroke="#0b94c8" stroke-width="1"/>
<rect x="97.5" y="310.5" width="3" height="39" fill="#1fc4f7" stroke="#0b94c8" stroke-width="1"/>
<rect x="102.5" y="310.5" width="3" height="39" fill="#1fc4f7" stroke="#0b94c8" stroke-width="1"/>
<rect x="108.5" y="310.5" width="3" height="39" fill="#1fc4f7" stroke="#0b94c8" stroke-width="1"/>
<rect x="114.5" y="310.5" width="3" height="39" fill="#1fc4f7" stroke="#0b94c8" stroke-width="1"/>
<rect x="120.5" y="310.5" width="3" height="39" fill="#1fc4f7" stroke="#0b94c8" stroke-width="1"/>
<rect x="126.5" y="310.5" width="3" height="39" fill="#1fc4f7" stroke="#0b94c8" stroke-width="1"/>
<rect x="132.5" y="310.5" width="3" height="39" fill="#1fc4f7" stroke="#0b94c8" stroke-width="1"/>
<rect x="138.5" y="310.5" width="3" height="39" fill="#1fc4f7" stroke="#0b94c8" stroke-width="1"/>
<rect x="144.5" y="310.5" width="3" height="39" fill="#1fc4f7" stroke="#0b94c8" stroke-width="1"/>
<rect x="150.5" y="310.5" width="3" height="39" fill="#1fc4f7" stroke="#0b94c8" stroke-width="1"/>
<rect x="156.5" y="310.5" width="3" height="39" fill="#1fc4f7" stroke="#0b94c8" stroke-width="1"/>
<rect x="162.5" y="310.5" width="3" height="39" fill="#1fc4f7" stroke="#0b94c8" stroke-width="1"/>
<rect x="167.5" y="310.5" width="3" height="39" fill="#1fc4f7" stroke="#0b94c8" stroke-width="1"/>
<rect x="173.5" y="310.5" width="3" height="39" fill="#1fc4f7" stroke="#0b94c8" stroke-width="1"/>
<rect x="179.5" y="310.5" width="3" height="39" fill="#1fc4f7" stroke="#0b94c8" stroke-width="1"/>
<rect x="185.5" y="310.5" width="3" height="39" fill="#1fc4f7" stroke="#0b94c8" stroke-width="1"/>
<rect x="191.5" y="310.5" width="3" height="39" fill="#1fc4f7" stroke="#0b94c8" stroke-width="1"/>
<rect x="197.5" y="310.5" width="3" height="39" fill="#1fc4f7" stroke="#0b94c8" stroke-width="1"/>
<rect x="203.5" y="310.5" width="3" height="39" fill="#1fc4f7" stroke="#0b94c8" stroke-width="1"/>
<rect x="209.5" y="310.5" width="3" height="39" fill="#1fc4f7" stroke="#0b94c8" stroke-width="1"/>
<rect x="215.5" y="310.5" width="3" height="39" fill="#1fc4f7" stroke="#0b94c8" stroke-width="1"/>
<rect x="221.5" y="310.5" width="3" height="39" fill="#1fc4f7" stroke="#0b94c8" stroke-width="1"/>
<rect x="227.5" y="310.5" width="3" height="39" fill="#1fc4f7" stroke="#0b94c8" stroke-width="1"/>
<rect x="233.5" y="310.5" width="3" height="39" fill="#1fc4f7" stroke="#0b94c8" stroke-width="1"/>
<rect x="238.5" y="310.5" width="3" height="39" fill="#1fc4f7" stroke="#0b94c8" stroke-width="1"/>
<rect x="244.5" y="310.5" width="3" height="39" fill="#1fc4f7" stroke="#0b94c8" stroke-width="1"/>
<rect x="250.5" y="310.5" width="3" height="39" fill="#1fc4f7" stroke="#0b94c8" stroke-width="1"/>
<rect x="256.5" y="310.5" width="3" height="39" fill="#1fc4f7" stroke="#0b94c8" stroke-width="1"/>
<rect x="262.5" y="310.5" width="3" height="39" fill="#1fc4f7" stroke="#0b94c8" stroke-width="1"/>
<rect x="274.5" y="310.5" width="3" height="39" fill="#1fc4f7" stroke="#0b94c8" stroke-width="1"/>
<rect x="280.5" y="310.5" width="3" height="39" fill="#1fc4f7" stroke="#0b94c8" stroke-width="1"/>
<rect x="286.5" y="310.5" width="3" height="39" fill="#1fc4f7" stroke="#0b94c8" stroke-width="1"/>
<rect x="292.5" y="310.5" width="3" height="39" fill="#1fc4f7" stroke="#0b94c8" stroke-width="1"/>
<rect x="321.5" y="310.5" width="3" height="39" fill="#1fc4f7" stroke="#0b94c8" stroke-width="1"/>
<rect x="339.5" y="310.5" width="3" height="39" fill="#1fc4f7" stroke="#0b94c8" stroke-width="1"/>
<rect x="345.5" y="310.5" width="3" height="39" fill="#1fc4f7" stroke="#0b94c8" stroke-width="1"/>
<rect x="351.5" y="310.5" width="3" height="39" fill="#1fc4f7" stroke="#0b94c8" stroke-width="1"/>
<rect x="357.5" y="310.5" width="3" height="39" fill="#1fc4f7" stroke="#0b94c8" stroke-width="1"/>
<rect x="363.5" y="310.5" width="3" height="39" fill="#1fc4f7" stroke="#0b94c8" stroke-width="1"/>
<rect x="369.5" y="310.5" width="3" height="39" fill="#1fc4f7" stroke="#0b94c8" stroke-width="1"/>
<rect x="374.5" y="310.5" width="3" height="39" fill="#1fc4f7" stroke="#0b94c8" stroke-width="1"/>
<rect x="380.5" y="310.5" width="3" height="39" fill="#1fc4f7" stroke="#0b94c8" stroke-width="1"/>
<rect x="386.5" y="310.5" width="3" height="39" fill="#1fc4f7" stroke="#0b94c8" stroke-width="1"/>
<rect x="392.5" y="310.5" width="3" height="39" fill="#1fc4f7" stroke="#0b94c8" stroke-width="1"/>
<rect x="398.5" y="310.5" width="3" height="39" fill="#1fc4f7" stroke="#0b94c8" stroke-width="1"/>
<rect x="404.5" y="310.5" width="3" height="39" fill="#1fc4f7" stroke="#0b94c8" stroke-width="1"/>
<rect x="410.5" y="310.5" width="3" height="39" fill="#1fc4f7" stroke="#0b94c8" stroke-width="1"/>
<rect x="416.5" y="310.5" width="3" height="39" fill="#1fc4f7" stroke="#0b94c8" stroke-width="1"/>
<rect x="422.5" y="310.5" width="3" height="39" fill="#1fc4f7" stroke="#0b94c8" stroke-width="1"/>
<rect x="428.5" y="310.5" width="3" height="39" fill="#1fc4f7" stroke="#0b94c8" stroke-width="1"/>
<rect x="493.5" y="310.5" width="3" height="39" fill="#1fc4f7" stroke="#0b94c8" stroke-width="1"/>
<rect x="499.5" y="310.5" width="3" height="39" fill="#1fc4f7" stroke="#0b94c8" stroke-width="1"/>
<rect x="505.5" y="310.5" width="3" height="39" fill="#1fc4f7" stroke="#0b94c8" stroke-width="1"/>
<rect x="511.5" y="310.5" width="3" height="39" fill="#1fc4f7" stroke="#0b94c8" stroke-width="1"/>
<rect x="516.5" y="310.5" width="3" height="39" fill="#1fc4f7" stroke="#0b94c8" stroke-width="1"/>
<rect x="522.5" y="310.5" width="3" height="39" fill="#1fc4f7" stroke="#0b94c8" stroke-width="1"/>
<rect x="564.5" y="310.5" width="3" height="39" fill="#1fc4f7" stroke="#0b94c8" stroke-width="1"/>
<rect x="570.5" y="310.5" width="3" height="39" fill="#1fc4f7" stroke="#0b94c8" stroke-width="1"/>
<rect x="605.5" y="310.5" width="3" height="39" fill="#1fc4f7" stroke="#0b94c8" stroke-width="1"/>
<rect x="611.5" y="310.5" width="3" height="39" fill="#1fc4f7" stroke="#0b94c8" stroke-width="1"/>
<rect x="617.5" y="310.5" width="3" height="39" fill="#1fc4f7" stroke="#0b94c8" stroke-width="1"/>
<rect x="623.5" y="310.5" width="3" height="39" fill="#1fc4f7" stroke="#0b94c8" stroke-width="1"/>
<rect x="629.5" y="310.5" width="3" height="39" fill="#1fc4f7" stroke="#0b94c8" stroke-width="1"/>
<rect x="919.5" y="310.5" width="3" height="39" fill="#1fc4f7" stroke="#0b94c8" stroke-width="1"/>
<rect x="924.5" y="310.5" width="3" height="39" fill="#1fc4f7" stroke="#0b94c8" stroke-width="1"/>
<rect x="930.5" y="310.5" width="3" height="39" fill="#1fc4f7" stroke="#0b94c8" stroke-width="1"/>
<rect x="936.5" y="310.5" width="3" height="39" fill="#1fc4f7" stroke="#0b94c8" stroke-width="1"/>
<rect x="942.5" y="310.5" width="3" height="39" fill="#1fc4f7" stroke="#0b94c8" stroke-width="1"/>
<rect x="978.5" y="310.5" width="3" height="39" fill="#1fc4f7" stroke="#0b94c8" stroke-width="1"/>
<rect x="984.5" y="310.5" width="3" height="39" fill="#1fc4f7" stroke="#0b94c8" stroke-width="1"/>
<rect x="990.5" y="310.5" width="3" height="39" fill="#1fc4f7" stroke="#0b94c8" stroke-width="1"/>
<rect x="995.5" y="310.5" width="3" height="39" fill="#1fc4f7" stroke="#0b94c8" stroke-width="1"/>
<rect x="1001.5" y="310.5" width="3" height="39" fill="#1fc4f7" stroke="#0b94c8" stroke-width="1"/>
<rect x="1025.5" y="310.5" width="3" height="39" fill="#1fc4f7" stroke="#0b94c8" stroke-width="1"/>
<rect x="1031.5" y="310.5" width="3" height="39" fill="#1fc4f7" stroke="#0b94c8" stroke-width="1"/>
<rect x="1043.5" y="310.5" width="3" height="39" fill="#1fc4f7" stroke="#0b94c8" stroke-width="1"/>
<rect x="1049.5" y="310.5" width="3" height="39" fill="#1fc4f7" stroke="#0b94c8" stroke-width="1"/>
<rect x="1055.5" y="310.5" width="3" height="39" fill="#1fc4f7" stroke="#0b94c8" stroke-width="1"/>
<rect x="1061.5" y="310.5" width="3" height="39" fill="#1fc4f7" stroke="#0b94c8" stroke-width="1"/>
<rect x="1066.5" y="310.5" width="3" height="39" fill="#1fc4f7" stroke="#0b94c8" stroke-width="1"/>
<rect x="1072.5" y="310.5" width="3" height="39" fill="#1fc4f7" stroke="#0b94c8" stroke-width="1"/>
<rect x="1078.5" y="310.5" width="3" height="39" fill="#1fc4f7" stroke="#0b94c8" stroke-width="1"/>
<rect x="1084.5" y="310.5" width="3" height="39" fill="#1fc4f7" stroke="#0b94c8" stroke-width="1"/>
<rect x="1090.5" y="310.5" width="3" height="39" fill="#1fc4f7" stroke="#0b94c8" stroke-width="1"/>
<rect x="1096.5" y="310.5" width="3" height="39" fill="#1fc4f7" stroke="#0b94c8" stroke-width="1"/>
<rect x="1102.5" y="310.5" width="3" height="39" fill="#1fc4f7" stroke="#0b94c8" stroke-width="1"/>
<rect x="1108.5" y="310.5" width="3" height="39" fill="#1fc4f7" stroke="#0b94c8" stroke-width="1"/>
<rect x="1114.5" y="310.5" width="3" height="39" fill="#1fc4f7" stroke="#0b94c8" stroke-width="1"/>
<rect x="1120.5" y="310.5" width="3" height="39" fill="#1fc4f7" stroke="#0b94c8" stroke-width="1"/>
<rect x="1126.5" y="310.5" width="3" height="39" fill="#1fc4f7" stroke="#0b94c8" stroke-width="1"/>
<rect x="1131.5" y="310.5" width="3" height="39" fill="#1fc4f7" stroke="#0b94c8" stroke-width="1"/>
<rect x="1137.5" y="310.5" width="3" height="39" fill="#1fc4f7" stroke="#0b94c8" stroke-width="1"/>
<rect x="1143.5" y="310.5" width="3" height="39" fill="#1fc4f7" stroke="#0b94c8" stroke-width="1"/>
<rect x="1149.5" y="310.5" width="3" height="39" fill="#1fc4f7" stroke="#0b94c8" stroke-width="1"/>
<rect x="1155.5" y="310.5" width="3" height="39" fill="#1fc4f7" stroke="#0b94c8" stroke-width="1"/>
<rect x="1161.5" y="310.5" width="3" height="39" fill="#1fc4f7" stroke="#0b94c8" stroke-width="1"/>
<rect x="1167.5" y="310.5" width="3" height="39" fill="#1fc4f7" stroke="#0b94c8" stroke-width="1"/>
<rect x="1173.5" y="310.5" width="3" height="39" fill="#1fc4f7" stroke="#0b94c8" stroke-width="1"/>
<rect x="1179.5" y="310.5" width="3" height="39" fill="#1fc4f7" stroke="#0b94c8" stroke-width="1"/>
<rect x="1185.5" y="310.5" width="3" height="39" fill="#1fc4f7" stroke="#0b94c8" stroke-width="1"/>
<rect x="1191.5" y="310.5" width="3" height="39" fill="#1fc4f7" stroke="#0b94c8" stroke-width="1"/>
<rect x="1197.5" y="310.5" width="3" height="39" fill="#1fc4f7" stroke="#0b94c8" stroke-width="1"/>
<rect x="1202.5" y="310.5" width="3" height="39" fill="#1fc4f7" stroke="#0b94c8" stroke-width="1"/>
<rect x="1208.5" y="310.5" width="3" height="39" fill="#1fc4f7" stroke="#0b94c8" stroke-width="1"/>
<rect x="1433.5" y="310.5" width="3" height="39" fill="#1fc4f7" stroke="#0b94c8" stroke-width="1"/>
<rect x="1439.5" y="310.5" width="3" height="39" fill="#1fc4f7" stroke="#0b94c8" stroke-width="1"/>
<rect x="1451.5" y="310.5" width="3" height="39" fill="#1fc4f7" stroke="#0b94c8" stroke-width="1"/>
<rect x="1457.5" y="310.5" width="3" height="39" fill="#1fc4f7" stroke="#0b94c8" stroke-width="1"/>
<rect x="268.5" y="351.5" width="3" height="39" fill="#fc9ef4" stroke="#cc62c9" stroke-width="1"/>
<rect x="298.5" y="351.5" width="3" height="39" fill="#fc9ef4" stroke="#cc62c9" stroke-width="1"/>
<rect x="304.5" y="351.5" width="3" height="39" fill="#fc9ef4" stroke="#cc62c9" stroke-width="1"/>
<rect x="309.5" y="351.5" width="3" height="39" fill="#fc9ef4" stroke="#cc62c9" stroke-width="1"/>
<rect x="327.5" y="351.5" width="3" height="39" fill="#fc9ef4" stroke="#cc62c9" stroke-width="1"/>
<rect x="434.5" y="351.5" width="3" height="39" fill="#fc9ef4" stroke="#cc62c9" stroke-width="1"/>
<rect x="440.5" y="351.5" width="3" height="39" fill="#fc9ef4" stroke="#cc62c9" stroke-width="1"/>
<rect x="445.5" y="351.5" width="3" height="39" fill="#fc9ef4" stroke="#cc62c9" stroke-width="1"/>
<rect x="451.5" y="351.5" width="3" height="39" fill="#fc9ef4" stroke="#cc62c9" stroke-width="1"/>
<rect x="457.5" y="351.5" width="3" height="39" fill="#fc9ef4" stroke="#cc62c9" stroke-width="1"/>
<rect x="463.5" y="351.5" width="3" height="39" fill="#fc9ef4" stroke="#cc62c9" stroke-width="1"/>
<rect x="469.5" y="351.5" width="3" height="39" fill="#fc9ef4" stroke="#cc62c9" stroke-width="1"/>
<rect x="475.5" y="351.5" width="3" height="39" fill="#fc9ef4" stroke="#cc62c9" stroke-width="1"/>
<rect x="481.5" y="351.5" width="3" height="39" fill="#fc9ef4" stroke="#cc62c9" stroke-width="1"/>
<rect x="487.5" y="351.5" width="3" height="39" fill="#fc9ef4" stroke="#cc62c9" stroke-width="1"/>
<rect x="528.5" y="351.5" width="3" height="39" fill="#fc9ef4" stroke="#cc62c9" stroke-width="1"/>
<rect x="534.5" y="351.5" width="3" height="39" fill="#fc9ef4" stroke="#cc62c9" stroke-width="1"/>
<rect x="540.5" y="351.5" width="3" height="39" fill="#fc9ef4" stroke="#cc62c9" stroke-width="1"/>
<rect x="546.5" y="351.5" width="3" height="39" fill="#fc9ef4" stroke="#cc62c9" stroke-width="1"/>
<rect x="552.5" y="351.5" width="3" height="39" fill="#fc9ef4" stroke="#cc62c9" stroke-width="1"/>
<rect x="558.5" y="351.5" width="3" height="39" fill="#fc9ef4" stroke="#cc62c9" stroke-width="1"/>
<rect x="576.5" y="351.5" width="3" height="39" fill="#fc9ef4" stroke="#cc62c9" stroke-width="1"/>
<rect x="581.5" y="351.5" width="3" height="39" fill="#fc9ef4" stroke="#cc62c9" stroke-width="1"/>
<rect x="587.5" y="351.5" width="3" height="39" fill="#fc9ef4" stroke="#cc62c9" stroke-width="1"/>
<rect x="593.5" y="351.5" width="3" height="39" fill="#fc9ef4" stroke="#cc62c9" stroke-width="1"/>
<rect x="599.5" y="351.5" width="3" height="39" fill="#fc9ef4" stroke="#cc62c9" stroke-width="1"/>
<rect x="842.5" y="351.5" width="3" height="39" fill="#fc9ef4" stroke="#cc62c9" stroke-width="1"/>
<rect x="848.5" y="351.5" width="3" height="39" fill="#fc9ef4" stroke="#cc62c9" stroke-width="1"/>
<rect x="854.5" y="351.5" width="3" height="39" fill="#fc9ef4" stroke="#cc62c9" stroke-width="1"/>
<rect x="859.5" y="351.5" width="3" height="39" fill="#fc9ef4" stroke="#cc62c9" stroke-width="1"/>
<rect x="865.5" y="351.5" width="3" height="39" fill="#fc9ef4" stroke="#cc62c9" stroke-width="1"/>
<rect x="871.5" y="351.5" width="3" height="39" fill="#fc9ef4" stroke="#cc62c9" stroke-width="1"/>
<rect x="877.5" y="351.5" width="3" height="39" fill="#fc9ef4" stroke="#cc62c9" stroke-width="1"/>
<rect x="883.5" y="351.5" width="3" height="39" fill="#fc9ef4" stroke="#cc62c9" stroke-width="1"/>
<rect x="889.5" y="351.5" width="3" height="39" fill="#fc9ef4" stroke="#cc62c9" stroke-width="1"/>
<rect x="895.5" y="351.5" width="3" height="39" fill="#fc9ef4" stroke="#cc62c9" stroke-width="1"/>
<rect x="901.5" y="351.5" width="3" height="39" fill="#fc9ef4" stroke="#cc62c9" stroke-width="1"/>
<rect x="907.5" y="351.5" width="3" height="39" fill="#fc9ef4" stroke="#cc62c9" stroke-width="1"/>
<rect x="913.5" y="351.5" width="3" height="39" fill="#fc9ef4" stroke="#cc62c9" stroke-width="1"/>
<rect x="1007.5" y="351.5" width="3" height="39" fill="#fc9ef4" stroke="#cc62c9" stroke-width="1"/>
<rect x="1013.5" y="351.5" width="3" height="39" fill="#fc9ef4" stroke="#cc62c9" stroke-width="1"/>
<rect x="1019.5" y="351.5" width="3" height="39" fill="#fc9ef4" stroke="#cc62c9" stroke-width="1"/>
<rect x="1214.5" y="351.5" width="3" height="39" fill="#fc9ef4" stroke="#cc62c9" stroke-width="1"/>
<rect x="1220.5" y="351.5" width="3" height="39" fill="#fc9ef4" stroke="#cc62c9" stroke-width="1"/>
<rect x="1226.5" y="351.5" width="3" height="39" fill="#fc9ef4" stroke="#cc62c9" stroke-width="1"/>
<rect x="1232.5" y="351.5" width="3" height="39" fill="#fc9ef4" stroke="#cc62c9" stroke-width="1"/>
<rect x="1238.5" y="351.5" width="3" height="39" fill="#fc9ef4" stroke="#cc62c9" stroke-width="1"/>
<rect x="1244.5" y="351.5" width="3" height="39" fill="#fc9ef4" stroke="#cc62c9" stroke-width="1"/>
<rect x="1250.5" y="351.5" width="3" height="39" fill="#fc9ef4" stroke="#cc62c9" stroke-width="1"/>
<rect x="1256.5" y="351.5" width="3" height="39" fill="#fc9ef4" stroke="#cc62c9" stroke-width="1"/>
<rect x="1262.5" y="351.5" width="3" height="39" fill="#fc9ef4" stroke="#cc62c9" stroke-width="1"/>
<rect x="1267.5" y="351.5" width="3" height="39" fill="#fc9ef4" stroke="#cc62c9" stroke-width="1"/>
<rect x="1273.5" y="351.5" width="3" height="39" fill="#fc9ef4" stroke="#cc62c9" stroke-width="1"/>
<rect x="1279.5" y="351.5" width="3" height="39" fill="#fc9ef4" stroke="#cc62c9" stroke-width="1"/>
<rect x="1285.5" y="351.5" width="3" height="39" fill="#fc9ef4" stroke="#cc62c9" stroke-width="1"/>
<rect x="1291.5" y="351.5" width="3" height="39" fill="#fc9ef4" stroke="#cc62c9" stroke-width="1"/>
<rect x="1297.5" y="351.5" width="3" height="39" fill="#fc9ef4" stroke="#cc62c9" stroke-width="1"/>
<rect x="1303.5" y="351.5" width="3" height="39" fill="#fc9ef4" stroke="#cc62c9" stroke-width="1"/>
<rect x="1309.5" y="351.5" width="3" height="39" fill="#fc9ef4" stroke="#cc62c9" stroke-width="1"/>
<rect x="1315.5" y="351.5" width="3" height="39" fill="#fc9ef4" stroke="#cc62c9" stroke-width="1"/>
<rect x="1321.5" y="351.5" width="3" height="39" fill="#fc9ef4" stroke="#cc62c9" stroke-width="1"/>
<rect x="1327.5" y="351.5" width="3" height="39" fill="#fc9ef4" stroke="#cc62c9" stroke-width="1"/>
<rect x="1333.5" y="351.5" width="3" height="39" fill="#fc9ef4" stroke="#cc62c9" stroke-width="1"/>
<rect x="1338.5" y="351.5" width="3" height="39" fill="#fc9ef4" stroke="#cc62c9" stroke-width="1"/>
<rect x="1344.5" y="351.5" width="3" height="39" fill="#fc9ef4" stroke="#cc62c9" stroke-width="1"/>
<rect x="1350.5" y="351.5" width="3" height="39" fill="#fc9ef4" stroke="#cc62c9" stroke-width="1"/>
<rect x="1356.5" y="351.5" width="3" height="39" fill="#fc9ef4" stroke="#cc62c9" stroke-width="1"/>
<rect x="1362.5" y="351.5" width="3" height="39" fill="#fc9ef4" stroke="#cc62c9" stroke-width="1"/>
<rect x="1368.5" y="351.5" width="3" height="39" fill="#fc9ef4" stroke="#cc62c9" stroke-width="1"/>
<rect x="1374.5" y="351.5" width="3" height="39" fill="#fc9ef4" stroke="#cc62c9" stroke-width="1"/>
<rect x="1380.5" y="351.5" width="3" height="39" fill="#fc9ef4" stroke="#cc62c9" stroke-width="1"/>
<rect x="1386.5" y="351.5" width="3" height="39" fill="#fc9ef4" stroke="#cc62c9" stroke-width="1"/>
<rect x="1392.5" y="351.5" width="3" height="39" fill="#fc9ef4" stroke="#cc62c9" stroke-width="1"/>
<rect x="1398.5" y="351.5" width="3" height="39" fill="#fc9ef4" stroke="#cc62c9" stroke-width="1"/>
<rect x="1404.5" y="351.5" width="3" height="39" fill="#fc9ef4" stroke="#cc62c9" stroke-width="1"/>
<rect x="1409.5" y="351.5" width="3" height="39" fill="#fc9ef4" stroke="#cc62c9" stroke-width="1"/>
<rect x="1415.5" y="351.5" width="3" height="39" fill="#fc9ef4" stroke="#cc62c9" stroke-width="1"/>
<rect x="1421.5" y="351.5" width="3" height="39" fill="#fc9ef4" stroke="#cc62c9" stroke-width="1"/>
<rect x="1427.5" y="351.5" width="3" height="39" fill="#fc9ef4" stroke="#cc62c9" stroke-width="1"/>
<rect x="1463.5" y="351.5" width="3" height="39" fill="#fc9ef4" stroke="#cc62c9" stroke-width="1"/>
<rect x="1469.5" y="351.5" width="3" height="39" fill="#fc9ef4" stroke="#cc62c9" stroke-width="1"/>
<rect x="1474.5" y="351.5" width="3" height="39" fill="#fc9ef4" stroke="#cc62c9" stroke-width="1"/>
<rect x="1480.5" y="351.5" width="3" height="39" fill="#fc9ef4" stroke="#cc62c9" stroke-width="1"/>
<rect x="1486.5" y="351.5" width="3" height="39" fill="#fc9ef4" stroke="#cc62c9" stroke-width="1"/>
<rect x="1492.5" y="351.5" width="3" height="39" fill="#fc9ef4" stroke="#cc62c9" stroke-width="1"/>
<rect x="1498.5" y="351.5" width="3" height="39" fill="#fc9ef4" stroke="#cc62c9" stroke-width="1"/>
<rect x="1504.5" y="351.5" width="3" height="39" fill="#fc9ef4" stroke="#cc62c9" stroke-width="1"/>
<rect x="1510.5" y="351.5" width="3" height="39" fill="#fc9ef4" stroke="#cc62c9" stroke-width="1"/>
<rect x="0" y="349.8" width="1516" height="1.2" fill="#3a3aa8"/>
<rect x="288" y="532.6" width="20" height="1.5" fill="#e23a48"/>
<rect x="316" y="532.6" width="20" height="1.5" fill="#e23a48"/>
<rect x="344" y="532.6" width="20" height="1.5" fill="#e23a48"/>
<rect x="372" y="532.6" width="20" height="1.5" fill="#e23a48"/>
<rect x="400" y="532.6" width="20" height="1.5" fill="#e23a48"/>
<rect x="428" y="532.6" width="20" height="1.5" fill="#e23a48"/>
<rect x="456" y="532.6" width="20" height="1.5" fill="#e23a48"/>
<rect x="484" y="532.6" width="20" height="1.5" fill="#e23a48"/>
<rect x="512" y="532.6" width="20" height="1.5" fill="#e23a48"/>
<rect x="540" y="532.6" width="20" height="1.5" fill="#e23a48"/>
<rect x="568" y="532.6" width="20" height="1.5" fill="#e23a48"/>
<rect x="596" y="532.6" width="20" height="1.5" fill="#e23a48"/>
<rect x="624" y="532.6" width="20" height="1.5" fill="#e23a48"/>
<rect x="652" y="532.6" width="20" height="1.5" fill="#e23a48"/>
<rect x="680" y="532.6" width="20" height="1.5" fill="#e23a48"/>
<rect x="708" y="532.6" width="20" height="1.5" fill="#e23a48"/>
<rect x="736" y="532.6" width="20" height="1.5" fill="#e23a48"/>
<rect x="764" y="532.6" width="20" height="1.5" fill="#e23a48"/>
<rect x="792" y="532.6" width="20" height="1.5" fill="#e23a48"/>
<rect x="820" y="532.6" width="20" height="1.5" fill="#e23a48"/>
<rect x="848" y="532.6" width="20" height="1.5" fill="#e23a48"/>
<rect x="876" y="532.6" width="20" height="1.5" fill="#e23a48"/>
<rect x="904" y="532.6" width="20" height="1.5" fill="#e23a48"/>
<rect x="932" y="532.6" width="20" height="1.5" fill="#e23a48"/>
<rect x="960" y="532.6" width="20" height="1.5" fill="#e23a48"/>
<rect x="988" y="532.6" width="20" height="1.5" fill="#e23a48"/>
<rect x="1016" y="532.6" width="20" height="1.5" fill="#e23a48"/>
<rect x="1044" y="532.6" width="20" height="1.5" fill="#e23a48"/>
<rect x="1072" y="532.6" width="20" height="1.5" fill="#e23a48"/>
<rect x="1100" y="532.6" width="20" height="1.5" fill="#e23a48"/>
<rect x="1128" y="532.6" width="20" height="1.5" fill="#e23a48"/>
<rect x="1156" y="532.6" width="20" height="1.5" fill="#e23a48"/>
<rect x="1184" y="532.6" width="20" height="1.5" fill="#e23a48"/>
<rect x="1212" y="532.6" width="20" height="1.5" fill="#e23a48"/>
<rect x="1240" y="532.6" width="20" height="1.5" fill="#e23a48"/>
<rect x="1268" y="532.6" width="20" height="1.5" fill="#e23a48"/>
<rect x="1296" y="532.6" width="20" height="1.5" fill="#e23a48"/>
<rect x="1324" y="532.6" width="20" height="1.5" fill="#e23a48"/>
<rect x="1352" y="532.6" width="20" height="1.5" fill="#e23a48"/>
<rect x="1380" y="532.6" width="20" height="1.5" fill="#e23a48"/>
<rect x="1408" y="532.6" width="20" height="1.5" fill="#e23a48"/>
<rect x="1436" y="532.6" width="20" height="1.5" fill="#e23a48"/>
<rect x="1464" y="532.6" width="20" height="1.5" fill="#e23a48"/>
<rect x="1492" y="532.6" width="20" height="1.5" fill="#e23a48"/>
<rect x="631.5" y="527.3" width="12.5" height="5.8" fill="#f77ee8" stroke="#d45ccc" stroke-width="0.7"/>
<rect x="1141" y="518.5" width="6.3" height="14.3" fill="#e8e81a"/>
<path d="M1194.3,484.2 L1202.8,484.2 L1203.5,479.1 L1211.8,479.1 L1214.3,474.0 L1220.7,471.4 L1236.1,471.4 L1238.0,474.6 L1238.0,491.2 L1232.2,496.3 L1224.6,498.9 L1219.5,500.8 L1194.3,500.8z" fill="#edee17" stroke="#edee17" stroke-width="2" stroke-linejoin="round"/>
<path d="M1432.2,485.9 L1449.1,485.9 L1454.2,489.1 L1459.3,494.8 L1470.8,497.4 L1473.4,502.5 L1473.4,512.1 L1457.4,512.1 L1456.7,506.3 L1451.6,502.5 L1432.2,501.2z" fill="#edee17" stroke="#edee17" stroke-width="2" stroke-linejoin="round"/>
<use href="#pd" x="113.5" y="646.2"/><use href="#bu" x="119.7" y="644.2"/>
<text x="116.5" y="659.3" font-size="7.6" font-weight="normal" fill="#4a4e60" stroke="#4a4e60" stroke-width="0.25" text-anchor="middle">4</text>
<use href="#pd" x="131.5" y="643.3"/><use href="#bu" x="137.7" y="641.3"/>
<text x="134.5" y="656.4" font-size="7.6" font-weight="normal" fill="#4a4e60" stroke="#4a4e60" stroke-width="0.25" text-anchor="middle">4</text>
<use href="#pd" x="149.5" y="646.2"/><use href="#bu" x="155.7" y="644.2"/>
<text x="152.5" y="659.3" font-size="7.6" font-weight="normal" fill="#4a4e60" stroke="#4a4e60" stroke-width="0.25" text-anchor="middle">6</text>
<use href="#pd" x="166.5" y="634.3"/><use href="#bu" x="172.7" y="632.3"/>
<text x="169.5" y="647.4" font-size="7.6" font-weight="normal" fill="#4a4e60" stroke="#4a4e60" stroke-width="0.25" text-anchor="middle">5</text>
<use href="#pd" x="184.5" y="625.4"/><use href="#bu" x="190.7" y="623.4"/>
<text x="187.5" y="638.5" font-size="7.6" font-weight="normal" fill="#4a4e60" stroke="#4a4e60" stroke-width="0.25" text-anchor="middle">5</text>
<use href="#pd" x="202.5" y="617.5"/><use href="#bu" x="208.7" y="615.5"/>
<text x="205.5" y="630.6" font-size="7.6" font-weight="normal" fill="#4a4e60" stroke="#4a4e60" stroke-width="0.25" text-anchor="middle">6</text>
<use href="#pd" x="220.5" y="616.6"/><use href="#bu" x="226.7" y="614.6"/>
<text x="223.5" y="629.7" font-size="7.6" font-weight="normal" fill="#4a4e60" stroke="#4a4e60" stroke-width="0.25" text-anchor="middle">6</text>
<use href="#pd" x="237.5" y="614.7"/><use href="#bu" x="243.7" y="612.7"/>
<text x="240.5" y="627.8" font-size="7.6" font-weight="normal" fill="#4a4e60" stroke="#4a4e60" stroke-width="0.25" text-anchor="middle">4</text>
<use href="#pd" x="255.5" y="617.5"/><use href="#bu" x="261.7" y="615.5"/>
<text x="258.5" y="630.6" font-size="7.6" font-weight="normal" fill="#4a4e60" stroke="#4a4e60" stroke-width="0.25" text-anchor="middle">6</text>
<use href="#pd" x="273.5" y="619.6"/><use href="#bu" x="279.7" y="617.6"/>
<text x="276.5" y="632.7" font-size="7.6" font-weight="normal" fill="#4a4e60" stroke="#4a4e60" stroke-width="0.25" text-anchor="middle">4</text>
<use href="#pd" x="273.5" y="645.7"/><use href="#bu" x="279.7" y="643.7"/>
<text x="276.5" y="658.8" font-size="7.6" font-weight="normal" fill="#4a4e60" stroke="#4a4e60" stroke-width="0.25" text-anchor="middle">6</text>
<use href="#pd" x="291.5" y="626.2"/><use href="#bu" x="297.7" y="624.2"/>
<text x="294.5" y="639.3" font-size="7.6" font-weight="normal" fill="#4a4e60" stroke="#4a4e60" stroke-width="0.25" text-anchor="middle">6</text>
<use href="#pd" x="297.5" y="635.4"/><use href="#bu" x="303.7" y="633.4"/>
<text x="300.5" y="648.5" font-size="7.6" font-weight="normal" fill="#4a4e60" stroke="#4a4e60" stroke-width="0.25" text-anchor="middle">2</text>
<use href="#pd" x="308.5" y="635.4"/><use href="#bu" x="314.7" y="633.4"/>
<text x="311.5" y="648.5" font-size="7.6" font-weight="normal" fill="#4a4e60" stroke="#4a4e60" stroke-width="0.25" text-anchor="middle">4</text>
<use href="#pd" x="320.5" y="631.3"/><use href="#bu" x="326.7" y="629.3"/>
<text x="323.5" y="644.4" font-size="7.6" font-weight="normal" fill="#4a4e60" stroke="#4a4e60" stroke-width="0.25" text-anchor="middle">2</text>
<use href="#pd" x="326.5" y="632.4"/><use href="#bu" x="332.7" y="630.4"/>
<text x="329.5" y="645.5" font-size="7.6" font-weight="normal" fill="#4a4e60" stroke="#4a4e60" stroke-width="0.25" text-anchor="middle">6</text>
<use href="#pd" x="338.5" y="626.2"/><use href="#bu" x="344.7" y="624.2"/>
<text x="341.5" y="639.3" font-size="7.6" font-weight="normal" fill="#4a4e60" stroke="#4a4e60" stroke-width="0.25" text-anchor="middle">4</text>
<use href="#pd" x="344.5" y="620.1"/><use href="#bu" x="350.7" y="618.1"/>
<text x="347.5" y="633.2" font-size="7.6" font-weight="normal" fill="#4a4e60" stroke="#4a4e60" stroke-width="0.25" text-anchor="middle">6</text>
<use href="#pd" x="362.5" y="611.2"/><use href="#bu" x="368.7" y="609.2"/>
<text x="365.5" y="624.3" font-size="7.6" font-weight="normal" fill="#4a4e60" stroke="#4a4e60" stroke-width="0.25" text-anchor="middle">6</text>
<use href="#pd" x="379.5" y="603.5"/><use href="#bu" x="385.7" y="601.5"/>
<text x="382.5" y="616.6" font-size="7.6" font-weight="normal" fill="#4a4e60" stroke="#4a4e60" stroke-width="0.25" text-anchor="middle">4</text>
<use href="#pd" x="397.5" y="587.3"/><use href="#bu" x="403.7" y="585.3"/>
<text x="400.5" y="600.4" font-size="7.6" font-weight="normal" fill="#4a4e60" stroke="#4a4e60" stroke-width="0.25" text-anchor="middle">6</text>
<use href="#pd" x="415.5" y="593.3"/><use href="#bu" x="421.7" y="591.3"/>
<text x="418.5" y="606.4" font-size="7.6" font-weight="normal" fill="#4a4e60" stroke="#4a4e60" stroke-width="0.25" text-anchor="middle">4</text>
<use href="#pd" x="433.5" y="605.5"/><use href="#bu" x="439.7" y="603.5"/>
<text x="436.5" y="618.6" font-size="7.6" font-weight="normal" fill="#4a4e60" stroke="#4a4e60" stroke-width="0.25" text-anchor="middle">2</text>
<use href="#pd" x="433.5" y="631.7"/><use href="#bu" x="439.7" y="629.7"/>
<text x="436.5" y="644.8" font-size="7.6" font-weight="normal" fill="#4a4e60" stroke="#4a4e60" stroke-width="0.25" text-anchor="middle">6</text>
<use href="#pd" x="450.5" y="609.3"/><use href="#bu" x="456.7" y="607.3"/>
<text x="453.5" y="622.4" font-size="7.6" font-weight="normal" fill="#4a4e60" stroke="#4a4e60" stroke-width="0.25" text-anchor="middle">3</text>
<use href="#pd" x="474.5" y="610.2"/><use href="#bu" x="480.7" y="608.2"/>
<text x="477.5" y="623.3" font-size="7.6" font-weight="normal" fill="#4a4e60" stroke="#4a4e60" stroke-width="0.25" text-anchor="middle">5</text>
<use href="#pd" x="492.5" y="601.6"/><use href="#bu" x="498.7" y="599.6"/>
<text x="495.5" y="614.7" font-size="7.6" font-weight="normal" fill="#4a4e60" stroke="#4a4e60" stroke-width="0.25" text-anchor="middle">2</text>
<use href="#pd" x="492.5" y="633.2"/><use href="#bu" x="498.7" y="631.2"/>
<text x="495.5" y="646.3" font-size="7.6" font-weight="normal" fill="#4a4e60" stroke="#4a4e60" stroke-width="0.25" text-anchor="middle">4</text>
<use href="#pd" x="510.5" y="600.4"/><use href="#bu" x="516.7" y="598.4"/>
<text x="513.5" y="613.5" font-size="7.6" font-weight="normal" fill="#4a4e60" stroke="#4a4e60" stroke-width="0.25" text-anchor="middle">6</text>
<use href="#pd" x="527.5" y="607.4"/><use href="#bu" x="533.7" y="605.4"/>
<text x="530.5" y="620.5" font-size="7.6" font-weight="normal" fill="#4a4e60" stroke="#4a4e60" stroke-width="0.25" text-anchor="middle">2</text>
<use href="#pd" x="527.5" y="634.2"/><use href="#bu" x="533.7" y="632.2"/>
<text x="530.5" y="647.3" font-size="7.6" font-weight="normal" fill="#4a4e60" stroke="#4a4e60" stroke-width="0.25" text-anchor="middle">4</text>
<use href="#pd" x="545.5" y="614.4"/><use href="#bu" x="551.7" y="612.4"/>
<text x="548.5" y="627.5" font-size="7.6" font-weight="normal" fill="#4a4e60" stroke="#4a4e60" stroke-width="0.25" text-anchor="middle">4</text>
<use href="#pd" x="563.5" y="619.5"/><use href="#bu" x="569.7" y="617.5"/>
<text x="566.5" y="632.6" font-size="7.6" font-weight="normal" fill="#4a4e60" stroke="#4a4e60" stroke-width="0.25" text-anchor="middle">6</text>
<use href="#pd" x="575.5" y="615.4"/><use href="#bu" x="581.7" y="613.4"/>
<text x="578.5" y="628.5" font-size="7.6" font-weight="normal" fill="#4a4e60" stroke="#4a4e60" stroke-width="0.25" text-anchor="middle">4</text>
<use href="#pd" x="580.5" y="618.2"/><use href="#bu" x="586.7" y="616.2"/>
<text x="583.5" y="631.3" font-size="7.6" font-weight="normal" fill="#4a4e60" stroke="#4a4e60" stroke-width="0.25" text-anchor="middle">4</text>
<use href="#pd" x="598.5" y="617.3"/><use href="#bu" x="604.7" y="615.3"/>
<text x="601.5" y="630.4" font-size="7.6" font-weight="normal" fill="#4a4e60" stroke="#4a4e60" stroke-width="0.25" text-anchor="middle">4</text>
<use href="#pd" x="604.5" y="610.0"/><use href="#bu" x="610.7" y="608.0"/>
<text x="607.5" y="623.1" font-size="7.6" font-weight="normal" fill="#4a4e60" stroke="#4a4e60" stroke-width="0.25" text-anchor="middle">2</text>
<use href="#pd" x="616.5" y="610.5"/><use href="#bu" x="622.7" y="608.5"/>
<text x="619.5" y="623.6" font-size="7.6" font-weight="normal" fill="#4a4e60" stroke="#4a4e60" stroke-width="0.25" text-anchor="middle">4</text>
<use href="#pd" x="634.5" y="561.7"/><use href="#bu" x="640.7" y="559.7"/>
<text x="637.5" y="574.8" font-size="7.6" font-weight="normal" fill="#4a4e60" stroke="#4a4e60" stroke-width="0.25" text-anchor="middle">6</text>
<use href="#pd" x="651.5" y="505.4"/><use href="#bu" x="657.7" y="503.4"/>
<text x="654.5" y="518.5" font-size="7.6" font-weight="normal" fill="#4a4e60" stroke="#4a4e60" stroke-width="0.25" text-anchor="middle">6</text>
<use href="#pd" x="669.5" y="508.5"/><use href="#bu" x="675.7" y="506.5"/>
<text x="672.5" y="521.6" font-size="7.6" font-weight="normal" fill="#4a4e60" stroke="#4a4e60" stroke-width="0.25" text-anchor="middle">6</text>
<use href="#pd" x="687.5" y="507.5"/><use href="#bu" x="693.7" y="505.5"/>
<text x="690.5" y="520.6" font-size="7.6" font-weight="normal" fill="#4a4e60" stroke="#4a4e60" stroke-width="0.25" text-anchor="middle">4</text>
<use href="#pd" x="705.5" y="520.2"/><use href="#bu" x="711.7" y="518.2"/>
<text x="708.5" y="533.3" font-size="7.6" font-weight="normal" fill="#4a4e60" stroke="#4a4e60" stroke-width="0.25" text-anchor="middle">6</text>
<use href="#pd" x="722.5" y="500.3"/><use href="#bu" x="728.7" y="498.3"/>
<text x="725.5" y="513.4" font-size="7.6" font-weight="normal" fill="#4a4e60" stroke="#4a4e60" stroke-width="0.25" text-anchor="middle">6</text>
<use href="#pd" x="740.5" y="489.3"/><use href="#bu" x="746.7" y="487.3"/>
<text x="743.5" y="502.4" font-size="7.6" font-weight="normal" fill="#4a4e60" stroke="#4a4e60" stroke-width="0.25" text-anchor="middle">4</text>
<use href="#pd" x="758.5" y="492.3"/><use href="#bu" x="764.7" y="490.3"/>
<text x="761.5" y="505.4" font-size="7.6" font-weight="normal" fill="#4a4e60" stroke="#4a4e60" stroke-width="0.25" text-anchor="middle">6</text>
<use href="#pd" x="776.5" y="494.4"/><use href="#bu" x="782.7" y="492.4"/>
<text x="779.5" y="507.5" font-size="7.6" font-weight="normal" fill="#4a4e60" stroke="#4a4e60" stroke-width="0.25" text-anchor="middle">6</text>
<use href="#pd" x="793.5" y="490.1"/><use href="#bu" x="799.7" y="488.1"/>
<text x="796.5" y="503.2" font-size="7.6" font-weight="normal" fill="#4a4e60" stroke="#4a4e60" stroke-width="0.25" text-anchor="middle">5</text>
<use href="#pd" x="811.5" y="482.1"/><use href="#bu" x="817.7" y="480.1"/>
<text x="814.5" y="495.2" font-size="7.6" font-weight="normal" fill="#4a4e60" stroke="#4a4e60" stroke-width="0.25" text-anchor="middle">3</text>
<use href="#pd" x="829.5" y="481.3"/><use href="#bu" x="835.7" y="479.3"/>
<text x="832.5" y="494.4" font-size="7.6" font-weight="normal" fill="#4a4e60" stroke="#4a4e60" stroke-width="0.25" text-anchor="middle">4</text>
<use href="#pd" x="847.5" y="504.2"/><use href="#bu" x="853.7" y="502.2"/>
<text x="850.5" y="517.3" font-size="7.6" font-weight="normal" fill="#4a4e60" stroke="#4a4e60" stroke-width="0.25" text-anchor="middle">6</text>
<use href="#pd" x="864.5" y="519.0"/><use href="#bu" x="870.7" y="517.0"/>
<text x="867.5" y="532.1" font-size="7.6" font-weight="normal" fill="#4a4e60" stroke="#4a4e60" stroke-width="0.25" text-anchor="middle">4</text>
<use href="#pd" x="882.5" y="542.0"/><use href="#bu" x="888.7" y="540.0"/>
<text x="885.5" y="555.1" font-size="7.6" font-weight="normal" fill="#4a4e60" stroke="#4a4e60" stroke-width="0.25" text-anchor="middle">4</text>
<use href="#pd" x="900.5" y="525.8"/><use href="#bu" x="906.7" y="523.8"/>
<text x="903.5" y="538.9" font-size="7.6" font-weight="normal" fill="#4a4e60" stroke="#4a4e60" stroke-width="0.25" text-anchor="middle">6</text>
<use href="#pd" x="918.5" y="501.2"/><use href="#bu" x="924.7" y="499.2"/>
<text x="921.5" y="514.3" font-size="7.6" font-weight="normal" fill="#4a4e60" stroke="#4a4e60" stroke-width="0.25" text-anchor="middle">2</text>
<use href="#pd" x="918.5" y="548.8"/><use href="#bu" x="924.7" y="546.8"/>
<text x="921.5" y="561.9" font-size="7.6" font-weight="normal" fill="#4a4e60" stroke="#4a4e60" stroke-width="0.25" text-anchor="middle">6</text>
<use href="#pd" x="935.5" y="505.1"/><use href="#bu" x="941.7" y="503.1"/>
<text x="938.5" y="518.2" font-size="7.6" font-weight="normal" fill="#4a4e60" stroke="#4a4e60" stroke-width="0.25" text-anchor="middle">6</text>
<use href="#pd" x="953.5" y="517.3"/><use href="#bu" x="959.7" y="515.3"/>
<text x="956.5" y="530.4" font-size="7.6" font-weight="normal" fill="#4a4e60" stroke="#4a4e60" stroke-width="0.25" text-anchor="middle">6</text>
<use href="#pd" x="959.5" y="519.5"/><use href="#bu" x="965.7" y="517.5"/>
<text x="962.5" y="532.6" font-size="7.6" font-weight="normal" fill="#4a4e60" stroke="#4a4e60" stroke-width="0.25" text-anchor="middle">7</text>
<use href="#pd" x="843.4" y="501.5"/>
<use href="#pd" x="971.5" y="519.6"/><use href="#bu" x="977.7" y="517.6"/>
<text x="974.5" y="532.7" font-size="7.6" font-weight="normal" fill="#4a4e60" stroke="#4a4e60" stroke-width="0.25" text-anchor="middle">6</text>
<use href="#pd" x="989.5" y="502.3"/><use href="#bu" x="995.7" y="500.3"/>
<text x="992.5" y="515.4" font-size="7.6" font-weight="normal" fill="#4a4e60" stroke="#4a4e60" stroke-width="0.25" text-anchor="middle">4</text>
<use href="#pd" x="1006.5" y="518.2"/><use href="#bu" x="1012.7" y="516.2"/>
<text x="1009.5" y="531.3" font-size="7.6" font-weight="normal" fill="#4a4e60" stroke="#4a4e60" stroke-width="0.25" text-anchor="middle">2</text>
<use href="#pd" x="1006.5" y="544.4"/><use href="#bu" x="1012.7" y="542.4"/>
<text x="1009.5" y="557.5" font-size="7.6" font-weight="normal" fill="#4a4e60" stroke="#4a4e60" stroke-width="0.25" text-anchor="middle">6</text>
<use href="#pd" x="1024.5" y="500.4"/><use href="#bu" x="1030.7" y="498.4"/>
<text x="1027.5" y="513.5" font-size="7.6" font-weight="normal" fill="#4a4e60" stroke="#4a4e60" stroke-width="0.25" text-anchor="middle">2</text>
<use href="#pd" x="1024.5" y="540.0"/><use href="#bu" x="1030.7" y="538.0"/>
<text x="1027.5" y="553.1" font-size="7.6" font-weight="normal" fill="#4a4e60" stroke="#4a4e60" stroke-width="0.25" text-anchor="middle">6</text>
<use href="#pd" x="1042.5" y="501.4"/><use href="#bu" x="1048.7" y="499.4"/>
<text x="1045.5" y="514.5" font-size="7.6" font-weight="normal" fill="#4a4e60" stroke="#4a4e60" stroke-width="0.25" text-anchor="middle">4</text>
<use href="#pd" x="1042.5" y="532.1"/><use href="#bu" x="1048.7" y="530.1"/>
<text x="1045.5" y="545.2" font-size="7.6" font-weight="normal" fill="#4a4e60" stroke="#4a4e60" stroke-width="0.25" text-anchor="middle">6</text>
<use href="#pd" x="1060.5" y="488.5"/><use href="#bu" x="1066.7" y="486.5"/>
<text x="1063.5" y="501.6" font-size="7.6" font-weight="normal" fill="#4a4e60" stroke="#4a4e60" stroke-width="0.25" text-anchor="middle">4</text>
<use href="#bu" transform="translate(980.7,501.4) scale(1.5)"/>
<use href="#od" x="1213.5" y="486.1"/><use href="#gu" x="1219.7" y="484.1"/>
<text x="1216.5" y="499.2" font-size="7.6" font-weight="normal" fill="#30364e" stroke="#30364e" stroke-width="0.25" text-anchor="middle">2</text>
<use href="#od" x="1444.5" y="497.4"/><use href="#gu" x="1450.7" y="495.4"/>
<text x="1447.5" y="510.5" font-size="7.6" font-weight="normal" fill="#30364e" stroke="#30364e" stroke-width="0.25" text-anchor="middle">5</text>
<use href="#od" x="1462.5" y="508.3"/><use href="#gu" x="1468.7" y="506.3"/>
<text x="1465.5" y="521.4" font-size="7.6" font-weight="normal" fill="#30364e" stroke="#30364e" stroke-width="0.25" text-anchor="middle">3</text>
<path d="M0.0,649.6 L23.0,645.4 L51.1,643.9 L76.7,641.3 L99.7,640.1 L127.8,635.0 L144.4,631.8 L157.2,628.6 L178.9,620.3 L200.0,610.7 L212.8,609.6 L231.9,606.4 L251.1,604.2 L261.3,603.0 L276.7,603.0 L292.0,601.9 L302.2,605.5 L315.0,606.4 L327.8,606.4 L340.6,605.1 L353.4,603.2 L366.1,600.4 L378.9,595.6 L391.7,589.8 L400.0,586.0 L408.3,584.6 L421.1,584.4 L433.9,585.4 L446.7,586.1 L459.5,586.9 L472.2,588.0 L485.0,588.5 L497.8,587.6 L510.6,586.1 L518.9,585.0 L527.2,586.1 L536.1,586.3 L548.9,589.5 L555.3,591.1 L565.6,590.5 L570.0,590.8 L578.3,592.4 L591.1,593.4 L601.3,593.0 L609.0,590.5 L616.7,582.2 L629.5,568.8 L639.3,560.0 L647.8,548.8 L663.1,532.6 L678.4,519.9 L692.0,513.9 L702.1,510.5 L712.3,502.9 L725.9,496.1 L739.5,490.1 L753.1,485.9 L766.7,483.3 L780.2,480.8 L790.0,480.3 L795.5,477.4 L812.5,474.0 L826.1,470.6 L838.0,471.4 L855.0,474.8 L868.6,481.6 L880.5,488.4 L897.4,492.7 L909.3,495.2 L922.9,493.5 L933.1,491.8 L950.1,492.7 L961.9,493.4 L970.0,494.0 L975.8,492.4 L989.6,487.5 L1001.5,483.9 L1015.4,486.5 L1029.3,485.5 L1043.2,482.5 L1055.1,478.6 L1068.9,472.0 L1088.8,467.7 L1108.6,464.7 L1128.4,462.1 L1142.8,461.2 L1150.0,460.7 L1161.9,459.9 L1181.1,459.0 L1200.3,458.4 L1211.8,459.9 L1225.8,462.1 L1245.0,464.1 L1264.2,466.1 L1283.4,467.6 L1302.5,468.9 L1315.3,469.8 L1330.0,469.5 L1339.2,470.6 L1358.3,472.5 L1377.5,475.0 L1396.7,477.6 L1415.8,479.8 L1428.6,480.1 L1441.4,478.9 L1454.2,479.5 L1467.0,482.7 L1479.7,486.5 L1492.5,489.1 L1505.3,490.8 L1516.0,491.4" fill="none" stroke="#e48593" stroke-width="1.35" stroke-linejoin="round"/>
<rect x="4" y="638.1" width="1.1" height="5.5" fill="#000"/>
<rect x="2" y="639.8" width="5" height="1.5" fill="#000"/>
<rect x="10" y="637.3" width="1.1" height="5.4" fill="#000"/>
<rect x="8.5" y="638.0" width="4" height="2.0" fill="#5cc65a" stroke="#000" stroke-width="1"/>
<rect x="16" y="632.1" width="1.1" height="6.4" fill="#000"/>
<rect x="14.5" y="633.9" width="4" height="3.1" fill="#5cc65a" stroke="#000" stroke-width="1"/>
<rect x="22" y="631.1" width="1.1" height="7.7" fill="#000"/>
<rect x="20.5" y="633.9" width="4" height="3.7" fill="#e26e70" stroke="#000" stroke-width="1"/>
<rect x="28" y="636.9" width="1.1" height="6.8" fill="#000"/>
<rect x="26.5" y="637.8" width="4" height="4.1" fill="#e26e70" stroke="#000" stroke-width="1"/>
<rect x="33" y="641.3" width="1.1" height="2.6" fill="#000"/>
<rect x="31" y="642.4" width="5" height="1.5" fill="#000"/>
<rect x="39" y="641.1" width="1.1" height="6.6" fill="#000"/>
<rect x="37.5" y="643.8" width="4" height="2.0" fill="#e26e70" stroke="#000" stroke-width="1"/>
<rect x="45" y="641.3" width="1.1" height="4.2" fill="#000"/>
<rect x="43.5" y="642.7" width="4" height="2.0" fill="#e26e70" stroke="#000" stroke-width="1"/>
<rect x="51" y="636.9" width="1.1" height="7.0" fill="#000"/>
<rect x="49.5" y="638.0" width="4" height="4.1" fill="#5cc65a" stroke="#000" stroke-width="1"/>
<rect x="57" y="630.1" width="1.1" height="8.7" fill="#000"/>
<rect x="55.5" y="631.0" width="4" height="5.8" fill="#5cc65a" stroke="#000" stroke-width="1"/>
<rect x="63" y="630.2" width="1.1" height="4.1" fill="#000"/>
<rect x="61.5" y="630.7" width="4" height="3.1" fill="#e26e70" stroke="#000" stroke-width="1"/>
<rect x="69" y="633.4" width="1.1" height="5.4" fill="#000"/>
<rect x="67" y="635.2" width="5" height="1.5" fill="#000"/>
<rect x="75" y="633.0" width="1.1" height="9.6" fill="#000"/>
<rect x="73.5" y="635.2" width="4" height="2.5" fill="#e26e70" stroke="#000" stroke-width="1"/>
<rect x="81" y="628.9" width="1.1" height="12.1" fill="#000"/>
<rect x="79" y="638.1" width="5" height="1.5" fill="#000"/>
<rect x="87" y="635.0" width="1.1" height="5.1" fill="#000"/>
<rect x="85" y="639.0" width="5" height="1.5" fill="#000"/>
<rect x="93" y="633.0" width="1.1" height="8.7" fill="#000"/>
<rect x="91" y="639.0" width="5" height="1.5" fill="#000"/>
<rect x="99" y="633.4" width="1.1" height="9.2" fill="#000"/>
<rect x="97.5" y="633.9" width="4" height="5.6" fill="#5cc65a" stroke="#000" stroke-width="1"/>
<rect x="104" y="632.1" width="1.1" height="5.4" fill="#000"/>
<rect x="102" y="633.4" width="5" height="1.5" fill="#000"/>
<rect x="110" y="622.2" width="1.1" height="12.8" fill="#000"/>
<rect x="108.5" y="626.8" width="4" height="6.2" fill="#5cc65a" stroke="#000" stroke-width="1"/>
<rect x="116" y="624.7" width="1.1" height="7.0" fill="#000"/>
<rect x="114" y="627.0" width="5" height="1.5" fill="#000"/>
<rect x="122" y="624.1" width="1.1" height="7.7" fill="#000"/>
<rect x="120.5" y="627.1" width="4" height="2.0" fill="#e26e70" stroke="#000" stroke-width="1"/>
<rect x="128" y="620.3" width="1.1" height="8.9" fill="#000"/>
<rect x="126.5" y="624.0" width="4" height="3.9" fill="#5cc65a" stroke="#000" stroke-width="1"/>
<rect x="134" y="620.9" width="1.1" height="9.6" fill="#000"/>
<rect x="132" y="622.8" width="5" height="1.5" fill="#000"/>
<rect x="140" y="616.4" width="1.1" height="10.2" fill="#000"/>
<rect x="138" y="621.5" width="5" height="1.5" fill="#000"/>
<rect x="146" y="617.7" width="1.1" height="17.0" fill="#000"/>
<rect x="144.5" y="622.7" width="4" height="8.3" fill="#e26e70" stroke="#000" stroke-width="1"/>
<rect x="152" y="609.4" width="1.1" height="23.0" fill="#000"/>
<rect x="150.5" y="614.7" width="4" height="15.2" fill="#5cc65a" stroke="#000" stroke-width="1"/>
<rect x="158" y="610.0" width="1.1" height="12.8" fill="#000"/>
<rect x="156.5" y="610.9" width="4" height="2.8" fill="#5cc65a" stroke="#000" stroke-width="1"/>
<rect x="164" y="599.8" width="1.1" height="14.7" fill="#000"/>
<rect x="162.5" y="601.6" width="4" height="8.3" fill="#5cc65a" stroke="#000" stroke-width="1"/>
<rect x="169" y="597.3" width="1.1" height="6.4" fill="#000"/>
<rect x="167" y="600.4" width="5" height="1.5" fill="#000"/>
<rect x="175" y="597.3" width="1.1" height="12.4" fill="#000"/>
<rect x="173.5" y="600.9" width="4" height="7.7" fill="#e26e70" stroke="#000" stroke-width="1"/>
<rect x="181" y="599.2" width="1.1" height="14.7" fill="#000"/>
<rect x="179.5" y="602.9" width="4" height="6.3" fill="#5cc65a" stroke="#000" stroke-width="1"/>
<rect x="187" y="590.0" width="1.1" height="13.0" fill="#000"/>
<rect x="185.5" y="595.8" width="4" height="6.0" fill="#5cc65a" stroke="#000" stroke-width="1"/>
<rect x="193" y="594.1" width="1.1" height="11.5" fill="#000"/>
<rect x="191.5" y="596.1" width="4" height="3.6" fill="#e26e70" stroke="#000" stroke-width="1"/>
<rect x="199" y="592.1" width="1.1" height="11.5" fill="#000"/>
<rect x="197.5" y="597.8" width="4" height="2.2" fill="#5cc65a" stroke="#000" stroke-width="1"/>
<rect x="205" y="592.4" width="1.1" height="7.3" fill="#000"/>
<rect x="203" y="597.1" width="5" height="1.5" fill="#000"/>
<rect x="211" y="594.9" width="1.1" height="9.6" fill="#000"/>
<rect x="209" y="595.9" width="5" height="1.5" fill="#000"/>
<rect x="217" y="593.0" width="1.1" height="7.7" fill="#000"/>
<rect x="215" y="595.6" width="5" height="1.5" fill="#000"/>
<rect x="223" y="592.0" width="1.1" height="7.7" fill="#000"/>
<rect x="221" y="595.6" width="5" height="1.5" fill="#000"/>
<rect x="229" y="593.0" width="1.1" height="5.8" fill="#000"/>
<rect x="227" y="596.6" width="5" height="1.5" fill="#000"/>
<rect x="235" y="594.0" width="1.1" height="6.6" fill="#000"/>
<rect x="233" y="596.6" width="5" height="1.5" fill="#000"/>
<rect x="240" y="594.3" width="1.1" height="8.3" fill="#000"/>
<rect x="238.5" y="596.7" width="4" height="4.5" fill="#e26e70" stroke="#000" stroke-width="1"/>
<rect x="246" y="597.5" width="1.1" height="7.3" fill="#000"/>
<rect x="244.5" y="600.1" width="4" height="2.0" fill="#5cc65a" stroke="#000" stroke-width="1"/>
<rect x="252" y="597.2" width="1.1" height="6.6" fill="#000"/>
<rect x="250.5" y="598.0" width="4" height="2.0" fill="#5cc65a" stroke="#000" stroke-width="1"/>
<rect x="258" y="594.9" width="1.1" height="6.8" fill="#000"/>
<rect x="256" y="596.8" width="5" height="1.5" fill="#000"/>
<rect x="264" y="592.0" width="1.1" height="15.7" fill="#000"/>
<rect x="262.5" y="596.7" width="4" height="8.6" fill="#e26e70" stroke="#000" stroke-width="1"/>
<rect x="270" y="597.2" width="1.1" height="10.5" fill="#000"/>
<rect x="268.5" y="598.6" width="4" height="6.0" fill="#5cc65a" stroke="#000" stroke-width="1"/>
<rect x="276" y="596.2" width="1.1" height="8.6" fill="#000"/>
<rect x="274.5" y="598.9" width="4" height="3.2" fill="#e26e70" stroke="#000" stroke-width="1"/>
<rect x="282" y="596.2" width="1.1" height="9.3" fill="#000"/>
<rect x="280.5" y="598.0" width="4" height="3.7" fill="#5cc65a" stroke="#000" stroke-width="1"/>
<rect x="288" y="593.0" width="1.1" height="8.9" fill="#000"/>
<rect x="286.5" y="597.6" width="4" height="3.2" fill="#e26e70" stroke="#000" stroke-width="1"/>
<rect x="294" y="598.4" width="1.1" height="16.4" fill="#000"/>
<rect x="292.5" y="601.8" width="4" height="9.9" fill="#e26e70" stroke="#000" stroke-width="1"/>
<rect x="300" y="610.9" width="1.1" height="11.5" fill="#000"/>
<rect x="298.5" y="612.9" width="4" height="6.7" fill="#e26e70" stroke="#000" stroke-width="1"/>
<rect x="306" y="612.8" width="1.1" height="8.9" fill="#000"/>
<rect x="304.5" y="614.6" width="4" height="6.4" fill="#5cc65a" stroke="#000" stroke-width="1"/>
<rect x="311" y="610.9" width="1.1" height="7.0" fill="#000"/>
<rect x="309.5" y="612.0" width="4" height="2.0" fill="#5cc65a" stroke="#000" stroke-width="1"/>
<rect x="317" y="599.1" width="1.1" height="13.7" fill="#000"/>
<rect x="315.5" y="600.8" width="4" height="10.2" fill="#5cc65a" stroke="#000" stroke-width="1"/>
<rect x="323" y="600.4" width="1.1" height="19.4" fill="#000"/>
<rect x="321.5" y="602.2" width="4" height="7.6" fill="#e26e70" stroke="#000" stroke-width="1"/>
<rect x="329" y="604.2" width="1.1" height="10.5" fill="#000"/>
<rect x="327.5" y="607.6" width="4" height="2.2" fill="#5cc65a" stroke="#000" stroke-width="1"/>
<rect x="335" y="599.1" width="1.1" height="8.6" fill="#000"/>
<rect x="333.5" y="600.8" width="4" height="5.8" fill="#5cc65a" stroke="#000" stroke-width="1"/>
<rect x="341" y="600.4" width="1.1" height="8.6" fill="#000"/>
<rect x="339.5" y="601.8" width="4" height="2.0" fill="#e26e70" stroke="#000" stroke-width="1"/>
<rect x="347" y="591.1" width="1.1" height="12.8" fill="#000"/>
<rect x="345.5" y="595.8" width="4" height="7.2" fill="#5cc65a" stroke="#000" stroke-width="1"/>
<rect x="353" y="588.5" width="1.1" height="8.9" fill="#000"/>
<rect x="351.5" y="593.2" width="4" height="2.0" fill="#5cc65a" stroke="#000" stroke-width="1"/>
<rect x="359" y="588.5" width="1.1" height="8.1" fill="#000"/>
<rect x="357" y="593.3" width="5" height="1.5" fill="#000"/>
<rect x="365" y="587.9" width="1.1" height="11.8" fill="#000"/>
<rect x="363.5" y="589.0" width="4" height="3.7" fill="#5cc65a" stroke="#000" stroke-width="1"/>
<rect x="371" y="578.3" width="1.1" height="13.4" fill="#000"/>
<rect x="369.5" y="586.1" width="4" height="2.0" fill="#5cc65a" stroke="#000" stroke-width="1"/>
<rect x="376" y="570.1" width="1.1" height="17.5" fill="#000"/>
<rect x="374.5" y="570.8" width="4" height="14.3" fill="#5cc65a" stroke="#000" stroke-width="1"/>
<rect x="382" y="569.1" width="1.1" height="6.4" fill="#000"/>
<rect x="380" y="570.3" width="5" height="1.5" fill="#000"/>
<rect x="388" y="565.2" width="1.1" height="10.2" fill="#000"/>
<rect x="386.5" y="567.6" width="4" height="2.5" fill="#5cc65a" stroke="#000" stroke-width="1"/>
<rect x="394" y="560.1" width="1.1" height="11.5" fill="#000"/>
<rect x="392" y="567.4" width="5" height="1.5" fill="#000"/>
<rect x="400" y="564.2" width="1.1" height="8.1" fill="#000"/>
<rect x="398.5" y="567.6" width="4" height="2.0" fill="#e26e70" stroke="#000" stroke-width="1"/>
<rect x="406" y="566.2" width="1.1" height="6.0" fill="#000"/>
<rect x="404.5" y="568.3" width="4" height="2.0" fill="#5cc65a" stroke="#000" stroke-width="1"/>
<rect x="412" y="567.1" width="1.1" height="10.6" fill="#000"/>
<rect x="410.5" y="567.9" width="4" height="8.1" fill="#e26e70" stroke="#000" stroke-width="1"/>
<rect x="418" y="573.5" width="1.1" height="8.1" fill="#000"/>
<rect x="416.5" y="577.0" width="4" height="2.1" fill="#e26e70" stroke="#000" stroke-width="1"/>
<rect x="424" y="576.1" width="1.1" height="9.6" fill="#000"/>
<rect x="422.5" y="579.8" width="4" height="2.0" fill="#e26e70" stroke="#000" stroke-width="1"/>
<rect x="430" y="579.9" width="1.1" height="8.9" fill="#000"/>
<rect x="428.5" y="580.8" width="4" height="7.2" fill="#e26e70" stroke="#000" stroke-width="1"/>
<rect x="436" y="583.4" width="1.1" height="10.2" fill="#000"/>
<rect x="434.5" y="586.6" width="4" height="2.0" fill="#5cc65a" stroke="#000" stroke-width="1"/>
<rect x="442" y="583.4" width="1.1" height="9.3" fill="#000"/>
<rect x="440.5" y="585.5" width="4" height="4.1" fill="#e26e70" stroke="#000" stroke-width="1"/>
<rect x="447" y="584.4" width="1.1" height="8.3" fill="#000"/>
<rect x="445.5" y="586.8" width="4" height="3.5" fill="#5cc65a" stroke="#000" stroke-width="1"/>
<rect x="453" y="585.4" width="1.1" height="12.4" fill="#000"/>
<rect x="451.5" y="586.8" width="4" height="8.3" fill="#e26e70" stroke="#000" stroke-width="1"/>
<rect x="459" y="594.0" width="1.1" height="5.8" fill="#000"/>
<rect x="457.5" y="596.1" width="4" height="2.0" fill="#e26e70" stroke="#000" stroke-width="1"/>
<rect x="465" y="590.1" width="1.1" height="8.6" fill="#000"/>
<rect x="463.5" y="590.9" width="4" height="7.1" fill="#5cc65a" stroke="#000" stroke-width="1"/>
<rect x="471" y="586.3" width="1.1" height="7.7" fill="#000"/>
<rect x="469" y="590.1" width="5" height="1.5" fill="#000"/>
<rect x="477" y="586.9" width="1.1" height="7.4" fill="#000"/>
<rect x="475.5" y="589.0" width="4" height="2.0" fill="#5cc65a" stroke="#000" stroke-width="1"/>
<rect x="483" y="586.3" width="1.1" height="9.6" fill="#000"/>
<rect x="481.5" y="589.0" width="4" height="5.4" fill="#e26e70" stroke="#000" stroke-width="1"/>
<rect x="489" y="584.1" width="1.1" height="11.8" fill="#000"/>
<rect x="487.5" y="586.2" width="4" height="7.3" fill="#5cc65a" stroke="#000" stroke-width="1"/>
<rect x="495" y="583.4" width="1.1" height="6.1" fill="#000"/>
<rect x="493" y="585.4" width="5" height="1.5" fill="#000"/>
<rect x="501" y="579.0" width="1.1" height="9.5" fill="#000"/>
<rect x="499.5" y="580.8" width="4" height="2.5" fill="#5cc65a" stroke="#000" stroke-width="1"/>
<rect x="507" y="578.0" width="1.1" height="5.8" fill="#000"/>
<rect x="505" y="579.7" width="5" height="1.5" fill="#000"/>
<rect x="513" y="578.3" width="1.1" height="6.1" fill="#000"/>
<rect x="511.5" y="580.0" width="4" height="2.0" fill="#e26e70" stroke="#000" stroke-width="1"/>
<rect x="518" y="578.6" width="1.1" height="5.1" fill="#000"/>
<rect x="516.5" y="580.8" width="4" height="2.0" fill="#5cc65a" stroke="#000" stroke-width="1"/>
<rect x="524" y="579.0" width="1.1" height="17.5" fill="#000"/>
<rect x="522.5" y="580.8" width="4" height="7.9" fill="#e26e70" stroke="#000" stroke-width="1"/>
<rect x="530" y="586.3" width="1.1" height="9.3" fill="#000"/>
<rect x="528" y="589.2" width="5" height="1.5" fill="#000"/>
<rect x="536" y="586.3" width="1.1" height="9.3" fill="#000"/>
<rect x="534.5" y="589.7" width="4" height="2.1" fill="#e26e70" stroke="#000" stroke-width="1"/>
<rect x="542" y="586.3" width="1.1" height="16.6" fill="#000"/>
<rect x="540.5" y="592.8" width="4" height="9.2" fill="#e26e70" stroke="#000" stroke-width="1"/>
<rect x="548" y="596.2" width="1.1" height="6.4" fill="#000"/>
<rect x="546" y="601.5" width="5" height="1.5" fill="#000"/>
<rect x="554" y="601.6" width="1.1" height="5.8" fill="#000"/>
<rect x="552.5" y="602.8" width="4" height="2.0" fill="#e26e70" stroke="#000" stroke-width="1"/>
<rect x="560" y="590.5" width="1.1" height="15.0" fill="#000"/>
<rect x="558.5" y="591.3" width="4" height="12.4" fill="#5cc65a" stroke="#000" stroke-width="1"/>
<rect x="566" y="589.2" width="1.1" height="10.2" fill="#000"/>
<rect x="564" y="589.5" width="5" height="1.5" fill="#000"/>
<rect x="572" y="589.2" width="1.1" height="7.4" fill="#000"/>
<rect x="570.5" y="590.3" width="4" height="3.5" fill="#e26e70" stroke="#000" stroke-width="1"/>
<rect x="578" y="593.0" width="1.1" height="10.5" fill="#000"/>
<rect x="576.5" y="594.8" width="4" height="5.4" fill="#e26e70" stroke="#000" stroke-width="1"/>
<rect x="583" y="599.4" width="1.1" height="7.0" fill="#000"/>
<rect x="581.5" y="601.2" width="4" height="2.6" fill="#e26e70" stroke="#000" stroke-width="1"/>
<rect x="589" y="594.3" width="1.1" height="10.2" fill="#000"/>
<rect x="587.5" y="595.7" width="4" height="7.3" fill="#5cc65a" stroke="#000" stroke-width="1"/>
<rect x="595" y="594.3" width="1.1" height="6.0" fill="#000"/>
<rect x="593" y="595.2" width="5" height="1.7" fill="#000"/>
<rect x="601" y="591.1" width="1.1" height="14.3" fill="#000"/>
<rect x="599.5" y="593.9" width="4" height="2.7" fill="#5cc65a" stroke="#000" stroke-width="1"/>
<rect x="607" y="561.5" width="1.1" height="37.1" fill="#000"/>
<rect x="605.5" y="565.8" width="4" height="27.1" fill="#5cc65a" stroke="#000" stroke-width="1"/>
<rect x="613" y="537.7" width="1.1" height="29.7" fill="#000"/>
<rect x="611.5" y="539.9" width="4" height="23.6" fill="#5cc65a" stroke="#000" stroke-width="1"/>
<rect x="619" y="529.2" width="1.1" height="19.5" fill="#000"/>
<rect x="617.5" y="530.9" width="4" height="8.9" fill="#5cc65a" stroke="#000" stroke-width="1"/>
<rect x="625" y="508.8" width="1.1" height="24.6" fill="#000"/>
<rect x="623.5" y="513.9" width="4" height="16.0" fill="#5cc65a" stroke="#000" stroke-width="1"/>
<rect x="631" y="511.4" width="1.1" height="13.3" fill="#000"/>
<rect x="629.5" y="513.6" width="4" height="2.0" fill="#e26e70" stroke="#000" stroke-width="1"/>
<rect x="637" y="491.0" width="1.1" height="28.5" fill="#000"/>
<rect x="635.5" y="492.8" width="4" height="21.9" fill="#5cc65a" stroke="#000" stroke-width="1"/>
<rect x="643" y="461.2" width="1.1" height="31.4" fill="#000"/>
<rect x="641.5" y="471.9" width="4" height="19.9" fill="#5cc65a" stroke="#000" stroke-width="1"/>
<rect x="649" y="466.8" width="1.1" height="27.2" fill="#000"/>
<rect x="647.5" y="471.9" width="4" height="7.0" fill="#e26e70" stroke="#000" stroke-width="1"/>
<rect x="654" y="473.1" width="1.1" height="12.4" fill="#000"/>
<rect x="652" y="479.1" width="5" height="1.5" fill="#000"/>
<rect x="660" y="472.3" width="1.1" height="10.5" fill="#000"/>
<rect x="658.5" y="479.2" width="4" height="2.7" fill="#e26e70" stroke="#000" stroke-width="1"/>
<rect x="666" y="482.1" width="1.1" height="14.8" fill="#000"/>
<rect x="664.5" y="483.0" width="4" height="4.9" fill="#e26e70" stroke="#000" stroke-width="1"/>
<rect x="672" y="478.2" width="1.1" height="16.5" fill="#000"/>
<rect x="670.5" y="488.9" width="4" height="4.9" fill="#e26e70" stroke="#000" stroke-width="1"/>
<rect x="678" y="476.2" width="1.1" height="18.5" fill="#000"/>
<rect x="676.5" y="476.7" width="4" height="17.2" fill="#5cc65a" stroke="#000" stroke-width="1"/>
<rect x="684" y="472.3" width="1.1" height="13.3" fill="#000"/>
<rect x="682.5" y="476.7" width="4" height="6.1" fill="#e26e70" stroke="#000" stroke-width="1"/>
<rect x="690" y="476.2" width="1.1" height="19.5" fill="#000"/>
<rect x="688.5" y="484.2" width="4" height="6.3" fill="#e26e70" stroke="#000" stroke-width="1"/>
<rect x="696" y="481.3" width="1.1" height="18.5" fill="#000"/>
<rect x="694" y="491.0" width="5" height="1.5" fill="#000"/>
<rect x="702" y="487.2" width="1.1" height="21.6" fill="#000"/>
<rect x="700" y="490.8" width="5" height="1.5" fill="#000"/>
<rect x="708" y="468.0" width="1.1" height="24.6" fill="#000"/>
<rect x="706.5" y="471.9" width="4" height="19.9" fill="#5cc65a" stroke="#000" stroke-width="1"/>
<rect x="714" y="465.1" width="1.1" height="12.6" fill="#000"/>
<rect x="712" y="471.1" width="5" height="1.5" fill="#000"/>
<rect x="719" y="464.3" width="1.1" height="8.8" fill="#000"/>
<rect x="717.5" y="470.7" width="4" height="2.0" fill="#e26e70" stroke="#000" stroke-width="1"/>
<rect x="725" y="471.9" width="1.1" height="17.0" fill="#000"/>
<rect x="723.5" y="472.8" width="4" height="4.1" fill="#e26e70" stroke="#000" stroke-width="1"/>
<rect x="731" y="468.4" width="1.1" height="9.3" fill="#000"/>
<rect x="729.5" y="468.9" width="4" height="8.0" fill="#5cc65a" stroke="#000" stroke-width="1"/>
<rect x="737" y="461.2" width="1.1" height="11.4" fill="#000"/>
<rect x="735.5" y="463.9" width="4" height="3.9" fill="#5cc65a" stroke="#000" stroke-width="1"/>
<rect x="743" y="459.0" width="1.1" height="8.5" fill="#000"/>
<rect x="741" y="462.6" width="5" height="1.5" fill="#000"/>
<rect x="749" y="455.0" width="1.1" height="25.8" fill="#000"/>
<rect x="747.5" y="462.9" width="4" height="9.7" fill="#e26e70" stroke="#000" stroke-width="1"/>
<rect x="755" y="464.3" width="1.1" height="8.8" fill="#000"/>
<rect x="753.5" y="468.0" width="4" height="3.8" fill="#5cc65a" stroke="#000" stroke-width="1"/>
<rect x="761" y="465.1" width="1.1" height="13.6" fill="#000"/>
<rect x="759.5" y="467.7" width="4" height="2.4" fill="#e26e70" stroke="#000" stroke-width="1"/>
<rect x="767" y="469.2" width="1.1" height="13.3" fill="#000"/>
<rect x="765.5" y="471.1" width="4" height="5.8" fill="#e26e70" stroke="#000" stroke-width="1"/>
<rect x="773" y="470.9" width="1.1" height="7.8" fill="#000"/>
<rect x="771" y="476.5" width="5" height="1.5" fill="#000"/>
<rect x="779" y="466.8" width="1.1" height="15.6" fill="#000"/>
<rect x="777.5" y="467.7" width="4" height="8.0" fill="#5cc65a" stroke="#000" stroke-width="1"/>
<rect x="785" y="464.3" width="1.1" height="8.8" fill="#000"/>
<rect x="783.5" y="468.0" width="4" height="2.1" fill="#e26e70" stroke="#000" stroke-width="1"/>
<rect x="790" y="466.8" width="1.1" height="11.9" fill="#000"/>
<rect x="788.5" y="471.1" width="4" height="3.2" fill="#e26e70" stroke="#000" stroke-width="1"/>
<rect x="796" y="465.1" width="1.1" height="11.9" fill="#000"/>
<rect x="794.5" y="466.8" width="4" height="7.5" fill="#5cc65a" stroke="#000" stroke-width="1"/>
<rect x="802" y="462.1" width="1.1" height="5.4" fill="#000"/>
<rect x="800.5" y="464.8" width="4" height="2.0" fill="#5cc65a" stroke="#000" stroke-width="1"/>
<rect x="808" y="462.4" width="1.1" height="8.2" fill="#000"/>
<rect x="806.5" y="464.3" width="4" height="2.0" fill="#e26e70" stroke="#000" stroke-width="1"/>
<rect x="814" y="448.2" width="1.1" height="21.6" fill="#000"/>
<rect x="812.5" y="457.0" width="4" height="8.9" fill="#5cc65a" stroke="#000" stroke-width="1"/>
<rect x="820" y="449.3" width="1.1" height="9.3" fill="#000"/>
<rect x="818.5" y="452.7" width="4" height="3.2" fill="#5cc65a" stroke="#000" stroke-width="1"/>
<rect x="826" y="451.9" width="1.1" height="5.6" fill="#000"/>
<rect x="824.5" y="452.7" width="4" height="2.1" fill="#e26e70" stroke="#000" stroke-width="1"/>
<rect x="832" y="455.0" width="1.1" height="14.3" fill="#000"/>
<rect x="830.5" y="455.8" width="4" height="10.0" fill="#e26e70" stroke="#000" stroke-width="1"/>
<rect x="838" y="465.1" width="1.1" height="21.6" fill="#000"/>
<rect x="836.5" y="466.8" width="4" height="16.0" fill="#e26e70" stroke="#000" stroke-width="1"/>
<rect x="844" y="480.8" width="1.1" height="10.7" fill="#000"/>
<rect x="842.5" y="483.8" width="4" height="2.9" fill="#e26e70" stroke="#000" stroke-width="1"/>
<rect x="850" y="480.4" width="1.1" height="11.9" fill="#000"/>
<rect x="848.5" y="485.0" width="4" height="2.0" fill="#5cc65a" stroke="#000" stroke-width="1"/>
<rect x="856" y="481.3" width="1.1" height="12.2" fill="#000"/>
<rect x="854.5" y="485.0" width="4" height="2.0" fill="#e26e70" stroke="#000" stroke-width="1"/>
<rect x="861" y="485.9" width="1.1" height="16.5" fill="#000"/>
<rect x="859.5" y="487.7" width="4" height="11.2" fill="#e26e70" stroke="#000" stroke-width="1"/>
<rect x="867" y="491.5" width="1.1" height="16.0" fill="#000"/>
<rect x="865.5" y="500.0" width="4" height="6.1" fill="#e26e70" stroke="#000" stroke-width="1"/>
<rect x="873" y="506.3" width="1.1" height="21.6" fill="#000"/>
<rect x="871.5" y="507.1" width="4" height="16.5" fill="#e26e70" stroke="#000" stroke-width="1"/>
<rect x="879" y="514.3" width="1.1" height="16.7" fill="#000"/>
<rect x="877.5" y="519.9" width="4" height="4.1" fill="#5cc65a" stroke="#000" stroke-width="1"/>
<rect x="885" y="502.4" width="1.1" height="17.5" fill="#000"/>
<rect x="883.5" y="504.7" width="4" height="14.1" fill="#5cc65a" stroke="#000" stroke-width="1"/>
<rect x="891" y="496.4" width="1.1" height="10.2" fill="#000"/>
<rect x="889.5" y="504.7" width="4" height="2.0" fill="#e26e70" stroke="#000" stroke-width="1"/>
<rect x="897" y="503.2" width="1.1" height="11.2" fill="#000"/>
<rect x="895.5" y="506.8" width="4" height="3.2" fill="#e26e70" stroke="#000" stroke-width="1"/>
<rect x="903" y="500.3" width="1.1" height="14.1" fill="#000"/>
<rect x="901.5" y="509.8" width="4" height="2.0" fill="#5cc65a" stroke="#000" stroke-width="1"/>
<rect x="909" y="496.4" width="1.1" height="15.0" fill="#000"/>
<rect x="907.5" y="499.6" width="4" height="9.5" fill="#5cc65a" stroke="#000" stroke-width="1"/>
<rect x="915" y="484.2" width="1.1" height="19.0" fill="#000"/>
<rect x="913.5" y="488.9" width="4" height="9.7" fill="#5cc65a" stroke="#000" stroke-width="1"/>
<rect x="921" y="477.0" width="1.1" height="12.2" fill="#000"/>
<rect x="919" y="487.6" width="5" height="1.5" fill="#000"/>
<rect x="926" y="480.3" width="1.1" height="9.3" fill="#000"/>
<rect x="924" y="485.9" width="5" height="2.0" fill="#000"/>
<rect x="932" y="478.2" width="1.1" height="10.2" fill="#000"/>
<rect x="930.5" y="484.2" width="4" height="2.0" fill="#5cc65a" stroke="#000" stroke-width="1"/>
<rect x="938" y="479.4" width="1.1" height="13.8" fill="#000"/>
<rect x="936.5" y="483.8" width="4" height="6.1" fill="#e26e70" stroke="#000" stroke-width="1"/>
<rect x="944" y="483.3" width="1.1" height="13.6" fill="#000"/>
<rect x="942.5" y="491.0" width="4" height="4.6" fill="#e26e70" stroke="#000" stroke-width="1"/>
<rect x="950" y="483.3" width="1.1" height="14.4" fill="#000"/>
<rect x="948.5" y="485.5" width="4" height="9.7" fill="#5cc65a" stroke="#000" stroke-width="1"/>
<rect x="956" y="484.2" width="1.1" height="21.6" fill="#000"/>
<rect x="954.5" y="485.5" width="4" height="18.5" fill="#e26e70" stroke="#000" stroke-width="1"/>
<rect x="962" y="487.6" width="1.1" height="19.9" fill="#000"/>
<rect x="960.5" y="494.9" width="4" height="9.2" fill="#5cc65a" stroke="#000" stroke-width="1"/>
<rect x="968" y="493.5" width="1.1" height="8.5" fill="#000"/>
<rect x="966.5" y="494.9" width="4" height="2.1" fill="#e26e70" stroke="#000" stroke-width="1"/>
<rect x="974" y="487.5" width="1.1" height="10.9" fill="#000"/>
<rect x="972.5" y="489.0" width="4" height="8.3" fill="#5cc65a" stroke="#000" stroke-width="1"/>
<rect x="980" y="466.7" width="1.1" height="23.8" fill="#000"/>
<rect x="978.5" y="470.7" width="4" height="17.2" fill="#5cc65a" stroke="#000" stroke-width="1"/>
<rect x="986" y="460.1" width="1.1" height="10.5" fill="#000"/>
<rect x="984.5" y="463.8" width="4" height="5.9" fill="#5cc65a" stroke="#000" stroke-width="1"/>
<rect x="992" y="455.8" width="1.1" height="10.9" fill="#000"/>
<rect x="990.5" y="463.8" width="4" height="2.0" fill="#e26e70" stroke="#000" stroke-width="1"/>
<rect x="997" y="461.7" width="1.1" height="15.9" fill="#000"/>
<rect x="995.5" y="465.8" width="4" height="6.3" fill="#e26e70" stroke="#000" stroke-width="1"/>
<rect x="1003" y="472.0" width="1.1" height="13.5" fill="#000"/>
<rect x="1001.5" y="473.1" width="4" height="11.5" fill="#e26e70" stroke="#000" stroke-width="1"/>
<rect x="1009" y="483.9" width="1.1" height="23.0" fill="#000"/>
<rect x="1007.5" y="485.0" width="4" height="6.9" fill="#e26e70" stroke="#000" stroke-width="1"/>
<rect x="1015" y="483.1" width="1.1" height="13.9" fill="#000"/>
<rect x="1013.5" y="492.9" width="4" height="2.0" fill="#e26e70" stroke="#000" stroke-width="1"/>
<rect x="1021" y="483.5" width="1.1" height="18.8" fill="#000"/>
<rect x="1019.5" y="486.0" width="4" height="8.3" fill="#5cc65a" stroke="#000" stroke-width="1"/>
<rect x="1027" y="473.0" width="1.1" height="15.5" fill="#000"/>
<rect x="1025.5" y="481.6" width="4" height="3.4" fill="#5cc65a" stroke="#000" stroke-width="1"/>
<rect x="1033" y="480.5" width="1.1" height="14.5" fill="#000"/>
<rect x="1031.5" y="482.0" width="4" height="4.9" fill="#e26e70" stroke="#000" stroke-width="1"/>
<rect x="1039" y="459.7" width="1.1" height="30.1" fill="#000"/>
<rect x="1037.5" y="466.6" width="4" height="19.4" fill="#5cc65a" stroke="#000" stroke-width="1"/>
<rect x="1045" y="463.7" width="1.1" height="13.9" fill="#000"/>
<rect x="1043.5" y="466.6" width="4" height="3.2" fill="#e26e70" stroke="#000" stroke-width="1"/>
<rect x="1051" y="465.7" width="1.1" height="10.9" fill="#000"/>
<rect x="1049" y="470.2" width="5" height="1.5" fill="#000"/>
<rect x="1057" y="451.4" width="1.1" height="18.2" fill="#000"/>
<rect x="1055.5" y="452.7" width="4" height="16.0" fill="#5cc65a" stroke="#000" stroke-width="1"/>
<rect x="1063" y="444.3" width="1.1" height="24.4" fill="#000"/>
<rect x="1061.5" y="446.0" width="4" height="5.7" fill="#5cc65a" stroke="#000" stroke-width="1"/>
<rect x="1068" y="439.9" width="1.1" height="15.9" fill="#000"/>
<rect x="1066.5" y="444.8" width="4" height="2.2" fill="#5cc65a" stroke="#000" stroke-width="1"/>
<rect x="1074" y="440.9" width="1.1" height="10.9" fill="#000"/>
<rect x="1072.5" y="444.8" width="4" height="6.1" fill="#e26e70" stroke="#000" stroke-width="1"/>
<rect x="1080" y="448.8" width="1.1" height="10.9" fill="#000"/>
<rect x="1078.5" y="451.9" width="4" height="6.3" fill="#e26e70" stroke="#000" stroke-width="1"/>
<rect x="1086" y="453.4" width="1.1" height="5.4" fill="#000"/>
<rect x="1084" y="458.3" width="5" height="1.5" fill="#000"/>
<rect x="1092" y="458.3" width="1.1" height="3.4" fill="#000"/>
<rect x="1090" y="458.7" width="5" height="1.5" fill="#000"/>
<rect x="1098" y="454.2" width="1.1" height="5.6" fill="#000"/>
<rect x="1096.5" y="456.3" width="4" height="2.0" fill="#5cc65a" stroke="#000" stroke-width="1"/>
<rect x="1104" y="453.8" width="1.1" height="4.0" fill="#000"/>
<rect x="1102.5" y="455.5" width="4" height="2.0" fill="#5cc65a" stroke="#000" stroke-width="1"/>
<rect x="1110" y="455.0" width="1.1" height="2.8" fill="#000"/>
<rect x="1108" y="455.0" width="5" height="1.5" fill="#000"/>
<rect x="1116" y="454.8" width="1.1" height="4.4" fill="#000"/>
<rect x="1114.5" y="456.7" width="4" height="2.0" fill="#e26e70" stroke="#000" stroke-width="1"/>
<rect x="1122" y="456.8" width="1.1" height="5.0" fill="#000"/>
<rect x="1120.5" y="458.8" width="4" height="2.0" fill="#e26e70" stroke="#000" stroke-width="1"/>
<rect x="1128" y="455.2" width="1.1" height="5.9" fill="#000"/>
<rect x="1126.5" y="457.9" width="4" height="2.0" fill="#5cc65a" stroke="#000" stroke-width="1"/>
<rect x="1133" y="452.8" width="1.1" height="5.6" fill="#000"/>
<rect x="1131" y="455.8" width="5" height="1.5" fill="#000"/>
<rect x="1139" y="455.4" width="1.1" height="4.0" fill="#000"/>
<rect x="1137" y="456.8" width="5" height="1.5" fill="#000"/>
<rect x="1145" y="454.8" width="1.1" height="4.0" fill="#000"/>
<rect x="1143.5" y="456.7" width="4" height="2.0" fill="#5cc65a" stroke="#000" stroke-width="1"/>
<rect x="1151" y="455.4" width="1.1" height="3.8" fill="#000"/>
<rect x="1149" y="457.4" width="5" height="1.5" fill="#000"/>
<rect x="1157" y="456.1" width="1.1" height="3.8" fill="#000"/>
<rect x="1155" y="457.7" width="5" height="1.5" fill="#000"/>
<rect x="1163" y="456.1" width="1.1" height="3.5" fill="#000"/>
<rect x="1161" y="458.0" width="5" height="1.5" fill="#000"/>
<rect x="1169" y="455.2" width="1.1" height="4.7" fill="#000"/>
<rect x="1167.5" y="456.6" width="4" height="2.5" fill="#e26e70" stroke="#000" stroke-width="1"/>
<rect x="1175" y="457.4" width="1.1" height="1.3" fill="#000"/>
<rect x="1173" y="457.4" width="5" height="1.5" fill="#000"/>
<rect x="1181" y="458.0" width="1.1" height="1.3" fill="#000"/>
<rect x="1179" y="458.0" width="5" height="1.5" fill="#000"/>
<rect x="1187" y="458.0" width="1.1" height="1.3" fill="#000"/>
<rect x="1185" y="458.0" width="5" height="1.5" fill="#000"/>
<rect x="1193" y="457.4" width="1.1" height="1.3" fill="#000"/>
<rect x="1191" y="457.4" width="5" height="1.5" fill="#000"/>
<rect x="1199" y="457.4" width="1.1" height="1.3" fill="#000"/>
<rect x="1197" y="457.4" width="5" height="1.5" fill="#000"/>
<rect x="1204" y="458.3" width="1.1" height="1.0" fill="#000"/>
<rect x="1202" y="458.3" width="5" height="1.5" fill="#000"/>
<rect x="1210" y="456.1" width="1.1" height="17.9" fill="#000"/>
<rect x="1208.5" y="458.9" width="4" height="9.1" fill="#e26e70" stroke="#000" stroke-width="1"/>
<rect x="1216" y="468.2" width="1.1" height="6.4" fill="#000"/>
<rect x="1214" y="468.2" width="5" height="1.5" fill="#000"/>
<rect x="1222" y="465.0" width="1.1" height="4.5" fill="#000"/>
<rect x="1220.5" y="465.8" width="4" height="3.0" fill="#5cc65a" stroke="#000" stroke-width="1"/>
<rect x="1228" y="464.1" width="1.1" height="2.8" fill="#000"/>
<rect x="1226" y="465.7" width="5" height="1.5" fill="#000"/>
<rect x="1234" y="465.4" width="1.1" height="4.3" fill="#000"/>
<rect x="1232" y="465.4" width="5" height="1.5" fill="#000"/>
<rect x="1240" y="467.3" width="1.1" height="4.7" fill="#000"/>
<rect x="1238.5" y="468.1" width="4" height="2.0" fill="#e26e70" stroke="#000" stroke-width="1"/>
<rect x="1246" y="469.2" width="1.1" height="5.4" fill="#000"/>
<rect x="1244.5" y="471.3" width="4" height="2.0" fill="#e26e70" stroke="#000" stroke-width="1"/>
<rect x="1252" y="469.5" width="1.1" height="5.1" fill="#000"/>
<rect x="1250.5" y="471.3" width="4" height="2.0" fill="#5cc65a" stroke="#000" stroke-width="1"/>
<rect x="1258" y="468.0" width="1.1" height="2.6" fill="#000"/>
<rect x="1256" y="470.1" width="5" height="1.5" fill="#000"/>
<rect x="1264" y="466.9" width="1.1" height="6.6" fill="#000"/>
<rect x="1262.5" y="471.0" width="4" height="2.0" fill="#e26e70" stroke="#000" stroke-width="1"/>
<rect x="1269" y="470.3" width="1.1" height="3.3" fill="#000"/>
<rect x="1267.5" y="471.0" width="4" height="2.0" fill="#5cc65a" stroke="#000" stroke-width="1"/>
<rect x="1275" y="467.2" width="1.1" height="4.9" fill="#000"/>
<rect x="1273" y="469.0" width="5" height="1.5" fill="#000"/>
<rect x="1281" y="471.4" width="1.1" height="3.2" fill="#000"/>
<rect x="1279" y="471.4" width="5" height="1.5" fill="#000"/>
<rect x="1287" y="471.2" width="1.1" height="9.6" fill="#000"/>
<rect x="1285.5" y="472.8" width="4" height="2.0" fill="#5cc65a" stroke="#000" stroke-width="1"/>
<rect x="1293" y="468.9" width="1.1" height="4.7" fill="#000"/>
<rect x="1291" y="468.9" width="5" height="1.5" fill="#000"/>
<rect x="1299" y="468.9" width="1.1" height="3.8" fill="#000"/>
<rect x="1297.5" y="469.4" width="4" height="2.0" fill="#e26e70" stroke="#000" stroke-width="1"/>
<rect x="1305" y="470.1" width="1.1" height="3.6" fill="#000"/>
<rect x="1303" y="472.1" width="5" height="1.5" fill="#000"/>
<rect x="1311" y="470.5" width="1.1" height="9.2" fill="#000"/>
<rect x="1309.5" y="471.9" width="4" height="6.0" fill="#e26e70" stroke="#000" stroke-width="1"/>
<rect x="1317" y="469.2" width="1.1" height="10.5" fill="#000"/>
<rect x="1315.5" y="470.3" width="4" height="7.7" fill="#5cc65a" stroke="#000" stroke-width="1"/>
<rect x="1323" y="468.5" width="1.1" height="4.2" fill="#000"/>
<rect x="1321" y="470.5" width="5" height="1.5" fill="#000"/>
<rect x="1329" y="468.4" width="1.1" height="3.2" fill="#000"/>
<rect x="1327" y="469.4" width="5" height="1.5" fill="#000"/>
<rect x="1335" y="469.7" width="1.1" height="2.8" fill="#000"/>
<rect x="1333" y="469.7" width="5" height="1.5" fill="#000"/>
<rect x="1340" y="469.3" width="1.1" height="5.4" fill="#000"/>
<rect x="1338.5" y="470.8" width="4" height="2.1" fill="#e26e70" stroke="#000" stroke-width="1"/>
<rect x="1346" y="470.9" width="1.1" height="2.7" fill="#000"/>
<rect x="1344.5" y="471.7" width="4" height="2.0" fill="#5cc65a" stroke="#000" stroke-width="1"/>
<rect x="1352" y="470.6" width="1.1" height="8.9" fill="#000"/>
<rect x="1350.5" y="472.1" width="4" height="5.0" fill="#e26e70" stroke="#000" stroke-width="1"/>
<rect x="1358" y="475.0" width="1.1" height="9.6" fill="#000"/>
<rect x="1356.5" y="476.8" width="4" height="6.0" fill="#e26e70" stroke="#000" stroke-width="1"/>
<rect x="1364" y="479.2" width="1.1" height="4.3" fill="#000"/>
<rect x="1362.5" y="481.0" width="4" height="2.0" fill="#5cc65a" stroke="#000" stroke-width="1"/>
<rect x="1370" y="476.3" width="1.1" height="5.5" fill="#000"/>
<rect x="1368.5" y="480.0" width="4" height="2.0" fill="#5cc65a" stroke="#000" stroke-width="1"/>
<rect x="1376" y="478.9" width="1.1" height="5.8" fill="#000"/>
<rect x="1374.5" y="479.7" width="4" height="3.1" fill="#e26e70" stroke="#000" stroke-width="1"/>
<rect x="1382" y="481.4" width="1.1" height="2.9" fill="#000"/>
<rect x="1380" y="482.4" width="5" height="1.5" fill="#000"/>
<rect x="1388" y="481.0" width="1.1" height="3.3" fill="#000"/>
<rect x="1386" y="483.6" width="5" height="1.5" fill="#000"/>
<rect x="1394" y="480.3" width="1.1" height="4.1" fill="#000"/>
<rect x="1392.5" y="481.0" width="4" height="2.0" fill="#5cc65a" stroke="#000" stroke-width="1"/>
<rect x="1400" y="476.3" width="1.1" height="6.4" fill="#000"/>
<rect x="1398.5" y="481.0" width="4" height="2.0" fill="#e26e70" stroke="#000" stroke-width="1"/>
<rect x="1406" y="480.5" width="1.1" height="10.1" fill="#000"/>
<rect x="1404.5" y="482.8" width="4" height="6.8" fill="#e26e70" stroke="#000" stroke-width="1"/>
<rect x="1411" y="489.5" width="1.1" height="5.1" fill="#000"/>
<rect x="1409" y="490.2" width="5" height="1.5" fill="#000"/>
<rect x="1417" y="487.6" width="1.1" height="7.9" fill="#000"/>
<rect x="1415.5" y="488.3" width="4" height="2.0" fill="#5cc65a" stroke="#000" stroke-width="1"/>
<rect x="1423" y="485.3" width="1.1" height="5.4" fill="#000"/>
<rect x="1421" y="486.3" width="5" height="1.5" fill="#000"/>
<rect x="1429" y="475.0" width="1.1" height="11.5" fill="#000"/>
<rect x="1427.5" y="475.8" width="4" height="9.9" fill="#5cc65a" stroke="#000" stroke-width="1"/>
<rect x="1435" y="474.4" width="1.1" height="3.6" fill="#000"/>
<rect x="1433" y="474.4" width="5" height="1.5" fill="#000"/>
<rect x="1441" y="473.4" width="1.1" height="15.1" fill="#000"/>
<rect x="1439.5" y="474.9" width="4" height="10.2" fill="#e26e70" stroke="#000" stroke-width="1"/>
<rect x="1447" y="476.7" width="1.1" height="8.9" fill="#000"/>
<rect x="1445.5" y="481.3" width="4" height="3.5" fill="#5cc65a" stroke="#000" stroke-width="1"/>
<rect x="1453" y="476.3" width="1.1" height="9.3" fill="#000"/>
<rect x="1451.5" y="478.1" width="4" height="2.2" fill="#5cc65a" stroke="#000" stroke-width="1"/>
<rect x="1459" y="477.2" width="1.1" height="17.4" fill="#000"/>
<rect x="1457.5" y="478.1" width="4" height="14.0" fill="#e26e70" stroke="#000" stroke-width="1"/>
<rect x="1465" y="487.4" width="1.1" height="9.1" fill="#000"/>
<rect x="1463.5" y="493.0" width="4" height="2.6" fill="#e26e70" stroke="#000" stroke-width="1"/>
<rect x="1471" y="495.5" width="1.1" height="12.1" fill="#000"/>
<rect x="1469" y="496.1" width="5" height="1.5" fill="#000"/>
<rect x="1476" y="495.5" width="1.1" height="5.1" fill="#000"/>
<rect x="1474.5" y="497.9" width="4" height="2.0" fill="#e26e70" stroke="#000" stroke-width="1"/>
<rect x="1482" y="495.5" width="1.1" height="8.1" fill="#000"/>
<rect x="1480.5" y="501.1" width="4" height="2.0" fill="#e26e70" stroke="#000" stroke-width="1"/>
<rect x="1488" y="497.4" width="1.1" height="7.3" fill="#000"/>
<rect x="1486.5" y="500.1" width="4" height="3.6" fill="#5cc65a" stroke="#000" stroke-width="1"/>
<rect x="1494" y="490.1" width="1.1" height="10.7" fill="#000"/>
<rect x="1492.5" y="492.8" width="4" height="6.9" fill="#5cc65a" stroke="#000" stroke-width="1"/>
<rect x="1500" y="492.0" width="1.1" height="8.8" fill="#000"/>
<rect x="1498.5" y="493.0" width="4" height="6.0" fill="#e26e70" stroke="#000" stroke-width="1"/>
<rect x="1506" y="496.1" width="1.1" height="6.1" fill="#000"/>
<rect x="1504" y="498.2" width="5" height="1.5" fill="#000"/>
<rect x="1512" y="494.2" width="1.1" height="6.4" fill="#000"/>
<rect x="1510.5" y="495.3" width="4" height="3.9" fill="#5cc65a" stroke="#000" stroke-width="1"/>
<rect x="0" y="688" width="1516" height="1.2" fill="#000"/>
<rect x="0" y="701" width="1516" height="5" fill="#2eac3e"/>
<rect x="-1" y="671.5" width="51.5" height="17" fill="#fff" stroke="#000" stroke-width="1"/>
<text x="2.0" y="684.1" font-size="10.8" font-weight="normal" fill="#000" textLength="42.0" lengthAdjust="spacingAndGlyphs">29,568.0</text>
<rect x="0" y="394" width="759.5" height="18" fill="#d7dfe8"/>
<rect x="0" y="411" width="760" height="1" fill="#7d8892"/>
<rect x="19.0" y="394" width="1" height="18" fill="#7d8892"/>
<rect x="39.0" y="394" width="1" height="18" fill="#7d8892"/>
<rect x="83.0" y="394" width="1" height="18" fill="#7d8892"/>
<rect x="192.0" y="394" width="1" height="18" fill="#7d8892"/>
<rect x="264.0" y="394" width="1" height="18" fill="#7d8892"/>
<rect x="412.0" y="394" width="1" height="18" fill="#7d8892"/>
<rect x="498.3" y="394" width="1" height="18" fill="#7d8892"/>
<rect x="591.1" y="394" width="1" height="18" fill="#7d8892"/>
<rect x="656.0" y="394" width="1" height="18" fill="#7d8892"/>
<rect x="720.7" y="394" width="1" height="18" fill="#7d8892"/>
<rect x="759.0" y="394" width="1" height="18" fill="#7d8892"/>
<rect x="3.5" y="398" width="12" height="10.5" fill="#fff" stroke="#8d9aa8" stroke-width="0.8"/><path d="M8.2,399.5h2.6v3h2.4l-3.7,4l-3.7,-4h2.4z" fill="#e8283a"/>
<rect x="23.5" y="398" width="12" height="10.5" fill="#fff" stroke="#8d9aa8" stroke-width="0.8"/><path d="M28.2,407h2.6v-3h2.4l-3.7,-4l-3.7,4h2.4z" fill="#27b02f"/>
<rect x="43.2" y="398.2" width="4.9" height="9.8" fill="#4fc24f"/><rect x="48.1" y="398.2" width="4.9" height="9.8" fill="#e8606a"/>
<text x="56.7" y="407.0" font-size="10.8" font-weight="normal" fill="#000" textLength="23.0" lengthAdjust="spacingAndGlyphs">Price</text>
<rect x="87.5" y="398.6" width="9" height="9" fill="#dfe6ee" stroke="#8796a6" stroke-width="0.9"/>
<text x="100.4" y="407.0" font-size="10.8" font-weight="normal" fill="#000" textLength="88.2" lengthAdjust="spacingAndGlyphs">SuperTrend (3 10)</text>
<rect x="198.0" y="398.6" width="9" height="9" fill="#dfe6ee" stroke="#8796a6" stroke-width="0.9"/>
<text x="209.6" y="407.0" font-size="10.8" font-weight="normal" fill="#000" textLength="51.1" lengthAdjust="spacingAndGlyphs">SMA (200)</text>
<rect x="268.5" y="398.6" width="9" height="9" fill="#dfe6ee" stroke="#8796a6" stroke-width="0.9"/>
<text x="281.1" y="407.0" font-size="10.8" font-weight="normal" fill="#000" textLength="127.5" lengthAdjust="spacingAndGlyphs">Example2 : Bollinger (2 20)</text>
<rect x="416.7" y="398.6" width="9" height="9" fill="#dfe6ee" stroke="#8796a6" stroke-width="0.9"/>
<text x="429.3" y="407.0" font-size="10.8" font-weight="normal" fill="#000" textLength="65.7" lengthAdjust="spacingAndGlyphs">VWAP (Daily)</text>
<rect x="502.2" y="398.2" width="3.3" height="9.8" fill="#e81c2c"/><rect x="505.5" y="398.2" width="3.3" height="9.8" fill="#111"/><rect x="508.8" y="398.2" width="3.3" height="9.8" fill="#1f9a2f"/>
<text x="515.5" y="407.0" font-size="10.8" font-weight="normal" fill="#000" textLength="72.0" lengthAdjust="spacingAndGlyphs">Pivot points (D)</text>
<rect x="595.6" y="398.4" width="9.4" height="9.4" fill="#e8646a"/>
<text x="608.2" y="407.0" font-size="10.8" font-weight="normal" fill="#000" textLength="44.8" lengthAdjust="spacingAndGlyphs">EMA (20)</text>
<rect x="660.5" y="398.6" width="9" height="9" fill="#dfe6ee" stroke="#8796a6" stroke-width="0.9"/>
<text x="673.2" y="407.0" font-size="10.8" font-weight="normal" fill="#000" textLength="44.7" lengthAdjust="spacingAndGlyphs">EMA (50)</text>
<text x="727.6" y="407.0" font-size="10.8" font-weight="normal" fill="#000" textLength="26.1" lengthAdjust="spacingAndGlyphs">Other</text>
<rect x="0" y="45.8" width="1516" height="1" fill="#737b83"/>
<rect x="0" y="127.8" width="1516" height="1" fill="#737b83"/>
<rect x="0" y="208.8" width="1516" height="1" fill="#737b83"/>
<rect x="0" y="301.1" width="1516" height="1" fill="#737b83"/>
<rect x="0" y="393.8" width="1516" height="1" fill="#7f878f"/>
<rect x="-1" y="46.5" width="253.7" height="16.5" fill="#d5e0ea" stroke="#828e98" stroke-width="0.9"/>
<rect x="3.5" y="50.5" width="4.5" height="9" fill="#27b4f2"/><rect x="8" y="50.5" width="4.5" height="9" fill="#f78ee8"/>
<text x="15.3" y="58.7" font-size="10.8" font-weight="normal" fill="#000" textLength="235.7" lengthAdjust="spacingAndGlyphs">ProBacktest - Equity curve: EMA 20 SYSTEm DJI</text>
<rect x="-1" y="129.0" width="236.5" height="16.5" fill="#d5e0ea" stroke="#828e98" stroke-width="0.9"/>
<rect x="3.5" y="133.0" width="4.5" height="9" fill="#27b4f2"/><rect x="8" y="133.0" width="4.5" height="9" fill="#f78ee8"/>
<text x="15.3" y="141.2" font-size="10.8" font-weight="normal" fill="#000" textLength="218.5" lengthAdjust="spacingAndGlyphs">ProBacktest - Positions: EMA 20 SYSTEm DJI</text>
<rect x="-1" y="210.0" width="353.3" height="16.5" fill="#d5e0ea" stroke="#828e98" stroke-width="0.9"/>
<rect x="3.5" y="214.0" width="4.5" height="9" fill="#27b4f2"/><rect x="8" y="214.0" width="4.5" height="9" fill="#f78ee8"/>
<text x="15.3" y="222.2" font-size="10.8" font-weight="normal" fill="#000" textLength="335.3" lengthAdjust="spacingAndGlyphs">ProBacktest - Equity curve: Sab EAx DJI M5 1K v1gh (0.2 0.9 0.1 0.9)</text>
<rect x="-1" y="301.8" width="336.0" height="16.5" fill="#d5e0ea" stroke="#828e98" stroke-width="0.9"/>
<rect x="3.5" y="305.8" width="4.5" height="9" fill="#27b4f2"/><rect x="8" y="305.8" width="4.5" height="9" fill="#f78ee8"/>
<text x="15.3" y="314.0" font-size="10.8" font-weight="normal" fill="#000" textLength="318.0" lengthAdjust="spacingAndGlyphs">ProBacktest - Positions: Sab EAx DJI M5 1K v1gh (0.2 0.9 0.1 0.9)</text>
<rect x="1516" y="46" width="49" height="660" fill="#fff"/>
<rect x="1516" y="46" width="1.2" height="660" fill="#7e8790"/>
<rect x="1516" y="45.5" width="49" height="1" fill="#c4cad0"/>
<rect x="1516" y="127.5" width="49" height="1" fill="#c4cad0"/>
<rect x="1516" y="208.5" width="49" height="1" fill="#c4cad0"/>
<rect x="1516" y="301.5" width="49" height="1" fill="#c4cad0"/>
<rect x="1516" y="53.7" width="5" height="1" fill="#555"/>
<text x="1522.9" y="58.1" font-size="10.8" font-weight="normal" fill="#111" textLength="32.6" lengthAdjust="spacingAndGlyphs">11,600</text>
<rect x="1516" y="83.7" width="5" height="1" fill="#555"/>
<text x="1522.9" y="88.1" font-size="10.8" font-weight="normal" fill="#111" textLength="32.6" lengthAdjust="spacingAndGlyphs">11,400</text>
<rect x="1516" y="100" width="3" height="1" fill="#777"/>
<rect x="1516" y="68.3" width="6" height="1.4" fill="#000"/>
<rect x="1521.3" y="61.8" width="36.5" height="14.4" fill="#f2f21e" stroke="#b8b800" stroke-width="0.8"/>
<text x="1523.0" y="73.0" font-size="10.8" font-weight="normal" fill="#000" textLength="32.0" lengthAdjust="spacingAndGlyphs">11,500</text>
<rect x="1516" y="135.9" width="5" height="1" fill="#555"/>
<text x="1522.9" y="140.3" font-size="10.8" font-weight="normal" fill="#111" textLength="14.8" lengthAdjust="spacingAndGlyphs">0.5</text>
<rect x="1516" y="170.5" width="6" height="1.2" fill="#5a8ad0"/>
<rect x="1522" y="164" width="8.6" height="14.4" fill="#cfe0f6" stroke="#8aa6cc" stroke-width="0.8"/>
<text x="1523.0" y="175.0" font-size="10.8" font-weight="normal" fill="#3a78c8" textLength="6.3" lengthAdjust="spacingAndGlyphs">0</text>
<rect x="1516" y="225.1" width="5" height="1" fill="#555"/>
<text x="1522.9" y="229.5" font-size="10.8" font-weight="normal" fill="#111" textLength="32.6" lengthAdjust="spacingAndGlyphs">11,100</text>
<rect x="1516" y="244.4" width="5" height="1" fill="#555"/>
<text x="1522.9" y="249.1" font-size="11.8" font-weight="bold" fill="#111" textLength="36.9" lengthAdjust="spacingAndGlyphs">11,000</text>
<rect x="1516" y="264.7" width="5" height="1" fill="#555"/>
<text x="1522.9" y="269.1" font-size="10.8" font-weight="normal" fill="#111" textLength="32.6" lengthAdjust="spacingAndGlyphs">10,900</text>
<rect x="1516" y="284.0" width="5" height="1" fill="#555"/>
<text x="1522.9" y="288.4" font-size="10.8" font-weight="normal" fill="#111" textLength="32.6" lengthAdjust="spacingAndGlyphs">10,800</text>
<rect x="1516" y="309.5" width="6" height="1.2" fill="#5a8ad0"/>
<rect x="1522" y="303.2" width="8.6" height="13.8" fill="#cfe0f6" stroke="#8aa6cc" stroke-width="0.8"/>
<text x="1523.0" y="314.0" font-size="10.8" font-weight="normal" fill="#3a78c8" textLength="6.3" lengthAdjust="spacingAndGlyphs">1</text>
<rect x="1516" y="329.9" width="5" height="1" fill="#555"/>
<text x="1522.9" y="334.3" font-size="10.8" font-weight="normal" fill="#111" textLength="14.8" lengthAdjust="spacingAndGlyphs">0.5</text>
<rect x="1516" y="349.3" width="5" height="1" fill="#555"/>
<text x="1522.9" y="354.0" font-size="11.8" font-weight="bold" fill="#111" textLength="6.7" lengthAdjust="spacingAndGlyphs">0</text>
<rect x="1516" y="370.2" width="5" height="1" fill="#555"/>
<text x="1522.9" y="374.6" font-size="10.8" font-weight="normal" fill="#111" textLength="18.4" lengthAdjust="spacingAndGlyphs">-0.5</text>
<rect x="1516" y="421.1" width="5" height="1" fill="#555"/>
<text x="1522.9" y="425.5" font-size="10.8" font-weight="normal" fill="#111" textLength="32.6" lengthAdjust="spacingAndGlyphs">30,400</text>
<rect x="1516" y="453.1" width="5" height="1" fill="#555"/>
<text x="1522.9" y="457.5" font-size="10.8" font-weight="normal" fill="#111" textLength="32.6" lengthAdjust="spacingAndGlyphs">30,300</text>
<rect x="1516" y="485.2" width="5" height="1" fill="#555"/>
<text x="1522.9" y="489.6" font-size="10.8" font-weight="normal" fill="#111" textLength="32.6" lengthAdjust="spacingAndGlyphs">30,200</text>
<rect x="1516" y="517.2" width="5" height="1" fill="#555"/>
<text x="1522.9" y="521.6" font-size="10.8" font-weight="normal" fill="#111" textLength="32.6" lengthAdjust="spacingAndGlyphs">30,100</text>
<rect x="1516" y="613.4" width="5" height="1" fill="#555"/>
<text x="1522.9" y="617.8" font-size="10.8" font-weight="normal" fill="#111" textLength="32.6" lengthAdjust="spacingAndGlyphs">29,800</text>
<rect x="1516" y="677.5" width="5" height="1" fill="#555"/>
<text x="1522.9" y="681.9" font-size="10.8" font-weight="normal" fill="#111" textLength="32.6" lengthAdjust="spacingAndGlyphs">29,600</text>
<rect x="1516" y="549.3" width="5" height="1" fill="#555"/>
<text x="1522.9" y="554.0" font-size="11.8" font-weight="bold" fill="#111" textLength="36.9" lengthAdjust="spacingAndGlyphs">30,000</text>
<rect x="1516" y="645.4" width="5" height="1" fill="#555"/>
<text x="1522.9" y="650.1" font-size="11.8" font-weight="bold" fill="#111" textLength="36.9" lengthAdjust="spacingAndGlyphs">29,700</text>
<rect x="1516" y="709.0" width="5" height="1" fill="#555"/>
<text x="1522.9" y="713.8" font-size="11.8" font-weight="bold" fill="#111" textLength="36.9" lengthAdjust="spacingAndGlyphs">29,500</text>
<rect x="1516" y="467.7" width="6" height="1.2" fill="#d04050"/>
<rect x="1521.3" y="461" width="48.700000000000045" height="13.5" fill="#dde4f0" stroke="#9aa8ba" stroke-width="0.8"/>
<text x="1523.0" y="471.8" font-size="10.8" font-weight="normal" fill="#e0202e" textLength="42.5" lengthAdjust="spacingAndGlyphs">30,254.5</text>
<rect x="1516" y="531.6" width="6" height="1.2" fill="#333"/>
<rect x="1521.3" y="525" width="48.700000000000045" height="13.5" fill="#dde4f0" stroke="#8a98aa" stroke-width="0.8"/>
<text x="1523.0" y="535.8" font-size="10.8" font-weight="normal" fill="#111" textLength="42.5" lengthAdjust="spacingAndGlyphs">30,055.3</text>
<rect x="1521.3" y="583.5" width="48.700000000000045" height="12.299999999999955" fill="#e6e8f2" stroke="#a8b0c0" stroke-width="0.8"/>
<text x="1523.0" y="592.3" font-size="10.8" font-weight="normal" fill="#e07a86" textLength="42.5" lengthAdjust="spacingAndGlyphs">29,900.9</text>
<rect x="1521.3" y="556" width="48.700000000000045" height="13.5" fill="#f7c71a" stroke="#d8a800" stroke-width="0.8"/>
<text x="1523.0" y="566.8" font-size="10.8" font-weight="normal" fill="#000" textLength="42.5" lengthAdjust="spacingAndGlyphs">29,919.6</text>
<rect x="1516" y="575" width="6" height="1.6" fill="#222"/><rect x="1516" y="581.5" width="6" height="1.2" fill="#555"/>
<rect x="1521.5" y="569.8" width="35" height="15.8" fill="#8fe38f"/>
<text x="1523.0" y="582.0" font-size="10.8" font-weight="normal" fill="#000" textLength="30.0" lengthAdjust="spacingAndGlyphs">4m44s</text>
<rect x="1516" y="649.4" width="6" height="1.2" fill="#2a8a3a"/>
<rect x="1521.3" y="645" width="48.700000000000045" height="12.200000000000045" fill="#e2e8f2" stroke="#9aa8ba" stroke-width="0.8"/>
<text x="1523.0" y="654.9" font-size="10.8" font-weight="normal" fill="#2a9a44" textLength="42.5" lengthAdjust="spacingAndGlyphs">29,685.3</text>
</svg>
</body></html>
